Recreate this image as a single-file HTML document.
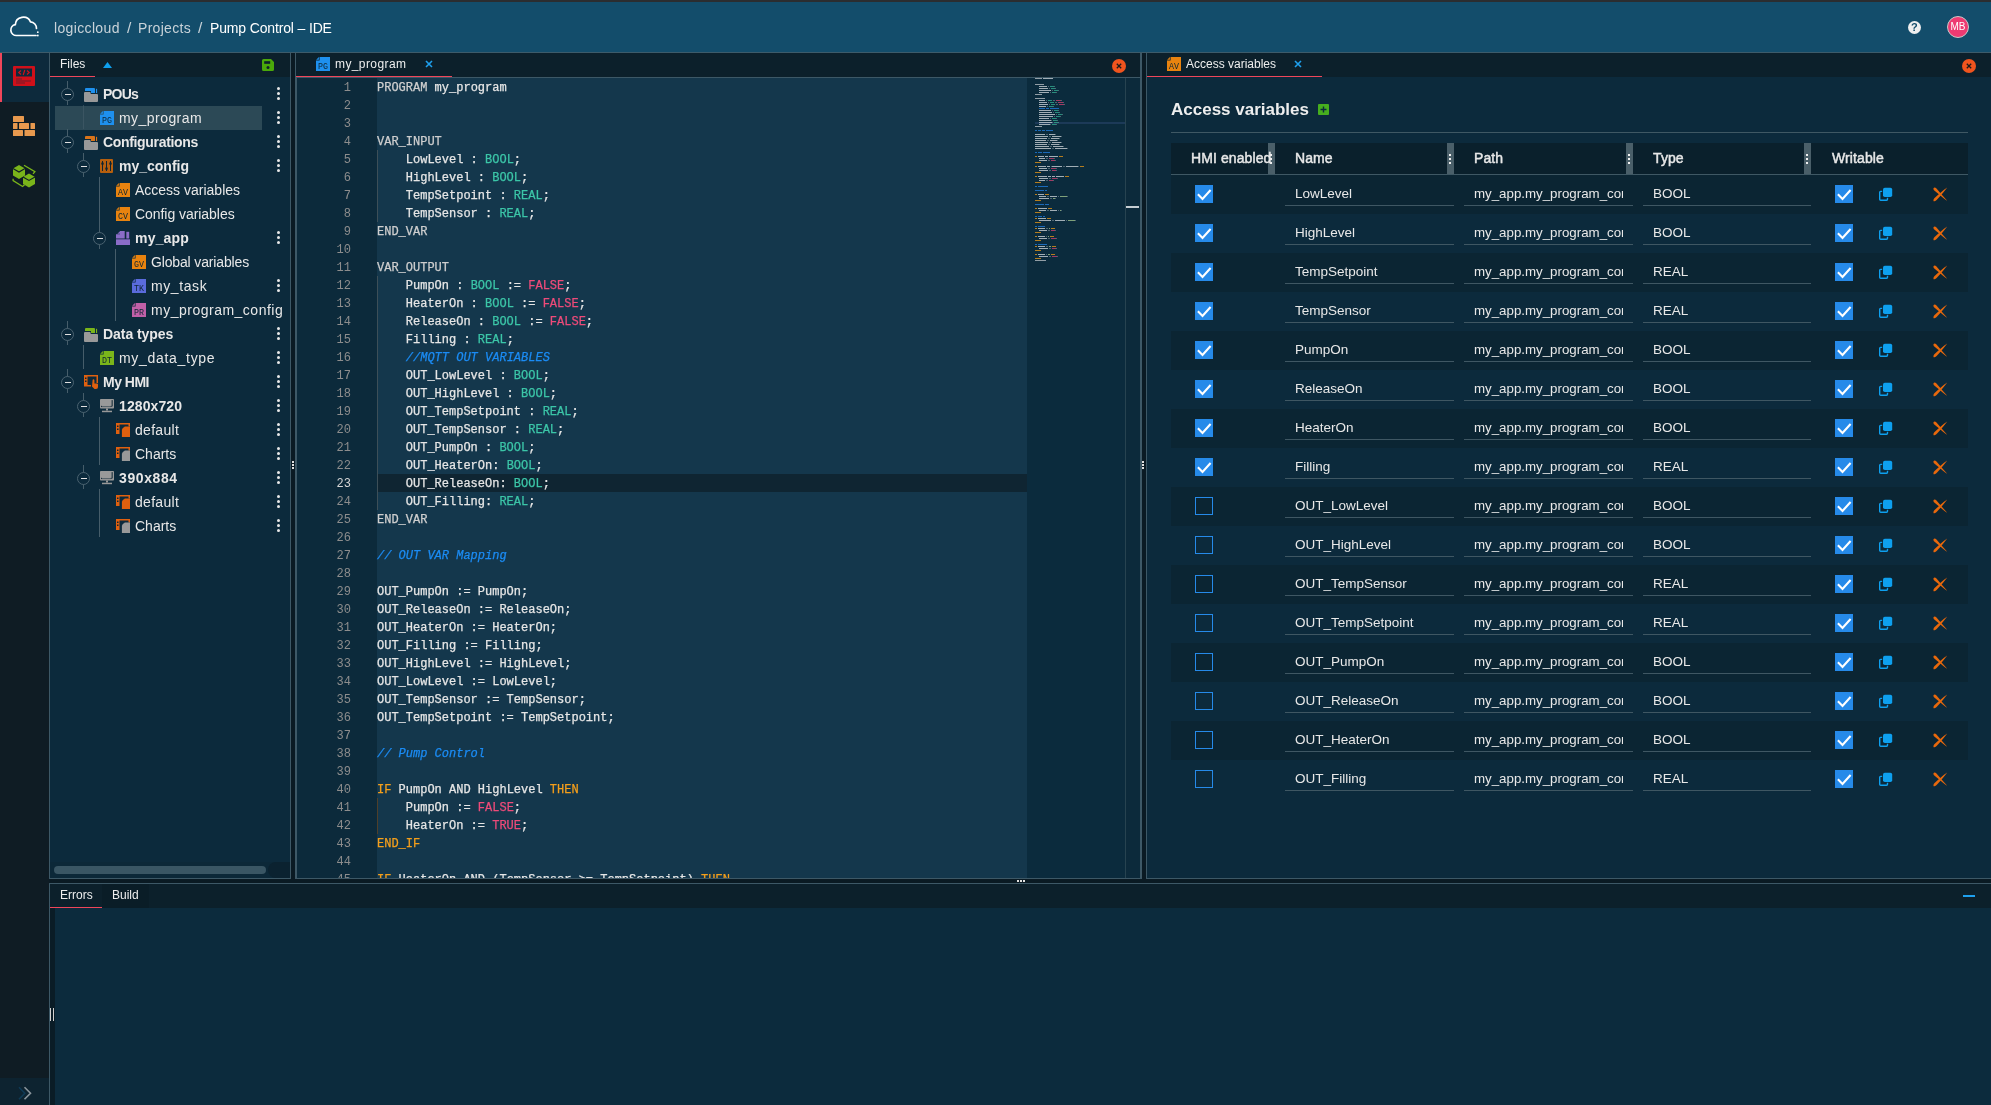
<!DOCTYPE html><html><head><meta charset="utf-8"><style>
*{box-sizing:border-box;margin:0;padding:0}
html,body{width:1991px;height:1105px;overflow:hidden;background:#0c2a3c;font-family:"Liberation Sans",sans-serif;color:#e6e6e6}
.a{position:absolute}
.t{position:absolute;white-space:nowrap;line-height:1}
.mono{font-family:"Liberation Mono",monospace}
.cl{position:absolute;left:377px;font-family:"Liberation Mono",monospace;font-size:12px;line-height:18px;height:18px;white-space:pre;color:#e6e6e6;-webkit-text-stroke:.25px currentColor}
.ln{position:absolute;width:60px;left:291px;text-align:right;font-family:"Liberation Mono",monospace;font-size:12px;line-height:18px;height:18px;color:#8d8d8d}
.k{color:#cfcfcf}.ty{color:#3cc6a8}.f{color:#ee4b7a}.c{color:#1b8cf5;font-style:italic}.o{color:#f59f1b}
.tr{position:absolute;height:24px;line-height:24px;font-size:14px;color:#e8e8e8;white-space:nowrap}
.bold{font-weight:bold}
.keb{position:absolute;left:277px;width:3px}
.keb i{display:block;width:3px;height:3px;border-radius:50%;background:#e8e8e8;margin-bottom:2px}
.vl{position:absolute;width:1px;background:#465d6a}
.circ{position:absolute;width:13px;height:13px;border:1px solid #4a6270;border-radius:50%;background:#0c2a3c}
.circ:after{content:"";position:absolute;left:2.5px;top:5px;width:6px;height:1px;background:#e0e0e0}
.ico{position:absolute;width:14px;height:14px}
.row{position:absolute;left:1171px;width:797px;height:39px}
.cb{position:absolute;width:18px;height:18px}
.inp{position:absolute;height:1px;background:#3f5763}
.ttx{position:absolute;font-size:14px;color:#e8e8e8;white-space:nowrap;line-height:1}
</style></head><body><div style="position:absolute;left:0;top:0;width:1991px;height:1105px;overflow:hidden;will-change:transform">
<div class="a" style="left:0;top:0;width:1991px;height:2px;background:#2b2d30"></div>
<div class="a" style="left:0;top:2px;width:1991px;height:51px;background:#134d6b;border-bottom:1px solid #3d5b6a"></div>
<svg class="a" style="left:9px;top:15px" width="32" height="24" viewBox="0 0 32 24"><path d="M27 20.5 H7.5 A5.5 5.5 0 0 1 6.3 9.6 A8 8 0 0 1 21.5 6.8 A6.5 6.5 0 0 1 27.5 13.5" fill="none" stroke="#fff" stroke-width="1.7" stroke-linecap="round"/><circle cx="28.8" cy="17.2" r="0.9" fill="#fff"/><circle cx="28.8" cy="20.5" r="0.9" fill="#fff"/></svg>
<div class="t" style="left:54px;top:21px;font-size:14px;letter-spacing:.35px;color:#c9d3d9">logiccloud</div>
<div class="t" style="left:127px;top:20px;font-size:15.5px;color:#c9d3d9">/</div>
<div class="t" style="left:138px;top:21px;font-size:14px;letter-spacing:.3px;color:#c9d3d9">Projects</div>
<div class="t" style="left:198px;top:20px;font-size:15.5px;color:#c9d3d9">/</div>
<div class="t" style="left:210px;top:21px;font-size:14px;color:#ffffff;letter-spacing:-.15px">Pump Control &#8211; IDE</div>
<div class="a" style="left:1908px;top:21px;width:13px;height:13px;border-radius:50%;background:#efefef"></div>
<div class="t" style="left:1911px;top:22px;font-size:11px;font-weight:bold;color:#134d6b">?</div>
<div class="a" style="left:1947px;top:16px;width:22px;height:22px;border-radius:50%;background:#ee3a72;border:1px solid #c9c9c9"></div>
<div class="t" style="left:1950px;top:22px;font-size:10px;color:#fff;width:16px;text-align:center">MB</div>
<div class="a" style="left:0;top:53px;width:49px;height:1052px;background:#0f1c24"></div>
<div class="a" style="left:0;top:53px;width:49px;height:49px;background:#0d2a3c"></div>
<div class="a" style="left:0;top:53px;width:2px;height:49px;background:#f0465a"></div>
<svg class="a" style="left:13px;top:66px" width="22" height="20" viewBox="0 0 22 20"><rect x="0" y="0" width="22" height="20" rx="1" fill="#d0101a"/><rect x="3" y="2.5" width="16" height="8" fill="#0d2a3c"/><path d="M8 4.5 L5.8 6.5 L8 8.5 M14 4.5 L16.2 6.5 L14 8.5 M11.8 4 L10.2 9" stroke="#d0101a" stroke-width="1.2" fill="none"/><rect x="3" y="12.5" width="6" height="1" fill="#0d2a3c" opacity=".5"/><rect x="3" y="14.5" width="15" height="1" fill="#0d2a3c" opacity=".5"/><rect x="3" y="16.5" width="9" height="1" fill="#0d2a3c" opacity=".5"/></svg>
<svg class="a" style="left:13px;top:116px" width="23" height="21" viewBox="0 0 23 21"><g fill="#e8994e"><rect x="0" y="0" width="11" height="6" rx=".5"/><rect x="0" y="7" width="4.5" height="6" rx=".5"/><rect x="6" y="7" width="10" height="6" rx=".5"/><rect x="17.5" y="7" width="4.5" height="6" rx=".5"/><rect x="0" y="14" width="10" height="6" rx=".5"/><rect x="11.5" y="14" width="10.5" height="6" rx=".5"/></g></svg>
<svg class="a" style="left:12px;top:164px" width="25" height="25" viewBox="0 0 25 25"><g fill="#7ab51a"><path d="M7 1 L13 4.5 V11.5 L7 15 L1 11.5 V4.5 Z"/><path d="M17 9.4 L23 12.9 V19.9 L17 23.4 L11 19.9 V12.9 Z"/></g><g stroke="#0f1c24" stroke-width="1.1" fill="none"><path d="M1 4.6 L7 8 L13 4.6"/><path d="M11 13 L17 16.4 L23 13"/></g><g stroke="#7ab51a" stroke-width="1.3" fill="none"><path d="M12 1.2 L22.9 7.6 L21 9.8"/><path d="M1.1 14.8 V16.6 L10.6 22.5 L12.5 20.7"/></g></svg>
<div class="a" style="left:0;top:1078px;width:49px;height:27px;background:#0d2330"></div>
<svg class="a" style="left:18px;top:1086px" width="14" height="15" viewBox="0 0 14 15"><path d="M1 1.3 L6.8 7.3 L1 13.3" stroke="#0f3a55" stroke-width="1.6" fill="none"/><path d="M6.5 1.3 L12.5 7.3 L6.5 13.3" stroke="#8a959c" stroke-width="1.6" fill="none"/></svg>
<div class="a" style="left:49px;top:53px;width:242px;height:826px;background:#0c2a3c;border-left:1px solid #3d5866;border-right:1px solid #3d5866;border-bottom:1px solid #3d5866"></div>
<div class="a" style="left:50px;top:53px;width:240px;height:24px;background:#0c202b"></div>
<div class="a" style="left:50px;top:76px;width:45px;height:1px;background:#f0465a;z-index:2"></div>
<div class="t" style="left:60px;top:58px;font-size:12px;color:#eeeeee">Files</div>
<svg class="a" style="left:103px;top:62px" width="9" height="6" viewBox="0 0 9 6"><path d="M0 6 L4.5 0 L9 6 Z" fill="#0ea0ee"/></svg>
<svg class="a" style="left:262px;top:59px" width="12" height="12" viewBox="0 0 12 12"><path d="M0 1.5 A1.5 1.5 0 0 1 1.5 0 H9 L12 3 V10.5 A1.5 1.5 0 0 1 10.5 12 H1.5 A1.5 1.5 0 0 1 0 10.5 Z" fill="#4aa80a"/><rect x="2.2" y="2.2" width="6" height="2.6" fill="#0c202b"/><circle cx="6" cy="8.5" r="1.5" fill="#0c202b"/></svg>
<div class="a" style="left:55px;top:106px;width:207px;height:24px;background:#2c4956"></div>
<div class="vl" style="left:67px;top:81px;height:24px"></div>
<div class="circ" style="left:61px;top:88px"></div>
<svg class="a" style="left:84px;top:87px" width="14" height="15" viewBox="0 0 14 15"><path d="M2 1 H10 A1 1 0 0 1 11 2 V6 H7 V4 H1 V2 A1 1 0 0 1 2 1 Z" fill="#1e90ee"/><rect x="12" y="1.8" width="1.1" height="4.2" fill="#1e90ee"/><path d="M0 6 A1 1 0 0 1 1 5 H6.3 L6.8 7 H13 A1 1 0 0 1 14 8 V14 A1 1 0 0 1 13 15 H1 A1 1 0 0 1 0 14 Z" fill="#999999"/></svg>
<div class="tr bold" style="left:103px;top:82px;letter-spacing:-0.75px">POUs</div>
<div class="keb" style="top:87px"><i></i><i></i><i></i></div>
<div class="vl" style="left:83px;top:105px;height:24px;opacity:.6"></div>
<svg class="a" style="left:100px;top:111px" width="14" height="14" viewBox="0 0 14 14"><path d="M3.6 0 H14 V14 H0 V3.5 H3.6 Z" fill="#1e90ee"/><path d="M0.2 2.7 L2.9 0 V2.7 Z" fill="#1e90ee"/><text x="7" y="12" font-family="Liberation Mono" font-size="8.3" text-anchor="middle" fill="#0d2533" textLength="10" lengthAdjust="spacingAndGlyphs">PG</text></svg>
<div class="tr" style="left:119px;top:106px;letter-spacing:0.45px">my_program</div>
<div class="keb" style="top:111px"><i></i><i></i><i></i></div>
<div class="vl" style="left:67px;top:129px;height:24px"></div>
<div class="circ" style="left:61px;top:136px"></div>
<svg class="a" style="left:84px;top:135px" width="14" height="15" viewBox="0 0 14 15"><path d="M2 1 H10 A1 1 0 0 1 11 2 V6 H7 V4 H1 V2 A1 1 0 0 1 2 1 Z" fill="#d9741a"/><rect x="12" y="1.8" width="1.1" height="4.2" fill="#d9741a"/><path d="M0 6 A1 1 0 0 1 1 5 H6.3 L6.8 7 H13 A1 1 0 0 1 14 8 V14 A1 1 0 0 1 13 15 H1 A1 1 0 0 1 0 14 Z" fill="#999999"/></svg>
<div class="tr bold" style="left:103px;top:130px;letter-spacing:-0.33px">Configurations</div>
<div class="keb" style="top:135px"><i></i><i></i><i></i></div>
<div class="vl" style="left:83px;top:153px;height:24px"></div>
<div class="circ" style="left:77px;top:160px"></div>
<svg class="a" style="left:100px;top:159px" width="13" height="14" viewBox="0 0 13 14"><rect width="13" height="14" rx="1" fill="#b65f0e"/><g stroke="#0d2533" stroke-width="1"><path d="M2.5 2 V12 M6.5 2 V12 M10.5 2 V12"/></g><g fill="#0d2533"><rect x="1.3" y="3.6" width="2.4" height="2"/><rect x="5.3" y="8.6" width="2.4" height="2"/><rect x="9.3" y="3.6" width="2.4" height="2"/></g></svg>
<div class="tr bold" style="left:119px;top:154px;letter-spacing:0.00px">my_config</div>
<div class="keb" style="top:159px"><i></i><i></i><i></i></div>
<div class="vl" style="left:99px;top:177px;height:24px;"></div>
<svg class="a" style="left:116px;top:183px" width="14" height="14" viewBox="0 0 14 14"><path d="M3.6 0 H14 V14 H0 V3.5 H3.6 Z" fill="#e8830f"/><path d="M0.2 2.7 L2.9 0 V2.7 Z" fill="#e8830f"/><text x="7" y="12" font-family="Liberation Mono" font-size="8.3" text-anchor="middle" fill="#0d2533" textLength="10" lengthAdjust="spacingAndGlyphs">AV</text></svg>
<div class="tr" style="left:135px;top:178px;letter-spacing:0.00px">Access variables</div>
<div class="vl" style="left:99px;top:201px;height:24px;"></div>
<svg class="a" style="left:116px;top:207px" width="14" height="14" viewBox="0 0 14 14"><path d="M3.6 0 H14 V14 H0 V3.5 H3.6 Z" fill="#e8830f"/><path d="M0.2 2.7 L2.9 0 V2.7 Z" fill="#e8830f"/><text x="7" y="12" font-family="Liberation Mono" font-size="8.3" text-anchor="middle" fill="#0d2533" textLength="10" lengthAdjust="spacingAndGlyphs">CV</text></svg>
<div class="tr" style="left:135px;top:202px;letter-spacing:-0.05px">Config variables</div>
<div class="vl" style="left:99px;top:225px;height:24px"></div>
<div class="circ" style="left:93px;top:232px"></div>
<svg class="a" style="left:116px;top:231px" width="14" height="14" viewBox="0 0 14 14"><g fill="#8a6cc8"><path d="M4 0 H8.7 V7.5 H0 V3.2 H4 Z"/><path d="M1.3 2.8 L4 0.2 V2.8 Z"/><rect x="10.3" y="0.8" width="2.9" height="6.7"/><rect x="0" y="8.3" width="14" height="5.7"/></g></svg>
<div class="tr bold" style="left:135px;top:226px;letter-spacing:0.20px">my_app</div>
<div class="keb" style="top:231px"><i></i><i></i><i></i></div>
<div class="vl" style="left:115px;top:249px;height:24px;"></div>
<svg class="a" style="left:132px;top:255px" width="14" height="14" viewBox="0 0 14 14"><path d="M3.6 0 H14 V14 H0 V3.5 H3.6 Z" fill="#e8830f"/><path d="M0.2 2.7 L2.9 0 V2.7 Z" fill="#e8830f"/><text x="7" y="12" font-family="Liberation Mono" font-size="8.3" text-anchor="middle" fill="#0d2533" textLength="10" lengthAdjust="spacingAndGlyphs">GV</text></svg>
<div class="tr" style="left:151px;top:250px;letter-spacing:-0.15px">Global variables</div>
<div class="vl" style="left:115px;top:273px;height:24px;"></div>
<svg class="a" style="left:132px;top:279px" width="14" height="14" viewBox="0 0 14 14"><path d="M3.6 0 H14 V14 H0 V3.5 H3.6 Z" fill="#5a6bdc"/><path d="M0.2 2.7 L2.9 0 V2.7 Z" fill="#5a6bdc"/><text x="7" y="12" font-family="Liberation Mono" font-size="8.3" text-anchor="middle" fill="#0d2533" textLength="10" lengthAdjust="spacingAndGlyphs">TK</text></svg>
<div class="tr" style="left:151px;top:274px;letter-spacing:0.60px">my_task</div>
<div class="keb" style="top:279px"><i></i><i></i><i></i></div>
<div class="vl" style="left:115px;top:297px;height:24px;"></div>
<svg class="a" style="left:132px;top:303px" width="14" height="14" viewBox="0 0 14 14"><path d="M3.6 0 H14 V14 H0 V3.5 H3.6 Z" fill="#c060a8"/><path d="M0.2 2.7 L2.9 0 V2.7 Z" fill="#c060a8"/><text x="7" y="12" font-family="Liberation Mono" font-size="8.3" text-anchor="middle" fill="#0d2533" textLength="10" lengthAdjust="spacingAndGlyphs">PR</text></svg>
<div class="tr" style="left:151px;top:298px;letter-spacing:0.50px">my_program_config</div>
<div class="vl" style="left:67px;top:321px;height:24px"></div>
<div class="circ" style="left:61px;top:328px"></div>
<svg class="a" style="left:84px;top:327px" width="14" height="15" viewBox="0 0 14 15"><path d="M2 1 H10 A1 1 0 0 1 11 2 V6 H7 V4 H1 V2 A1 1 0 0 1 2 1 Z" fill="#7ab51a"/><rect x="12" y="1.8" width="1.1" height="4.2" fill="#7ab51a"/><path d="M0 6 A1 1 0 0 1 1 5 H6.3 L6.8 7 H13 A1 1 0 0 1 14 8 V14 A1 1 0 0 1 13 15 H1 A1 1 0 0 1 0 14 Z" fill="#999999"/></svg>
<div class="tr bold" style="left:103px;top:322px;letter-spacing:-0.05px">Data types</div>
<div class="keb" style="top:327px"><i></i><i></i><i></i></div>
<div class="vl" style="left:83px;top:345px;height:24px;"></div>
<svg class="a" style="left:100px;top:351px" width="14" height="14" viewBox="0 0 14 14"><path d="M3.6 0 H14 V14 H0 V3.5 H3.6 Z" fill="#7ab51a"/><path d="M0.2 2.7 L2.9 0 V2.7 Z" fill="#7ab51a"/><text x="7" y="12" font-family="Liberation Mono" font-size="8.3" text-anchor="middle" fill="#0d2533" textLength="10" lengthAdjust="spacingAndGlyphs">DT</text></svg>
<div class="tr" style="left:119px;top:346px;letter-spacing:0.70px">my_data_type</div>
<div class="keb" style="top:351px"><i></i><i></i><i></i></div>
<div class="vl" style="left:67px;top:369px;height:24px"></div>
<div class="circ" style="left:61px;top:376px"></div>
<svg class="a" style="left:84px;top:375px" width="14" height="14" viewBox="0 0 14 14"><g fill="#e0600f"><path d="M0 0 H14 V8 H12.5 V1.5 H3.5 V10 H7 V11.5 H0 Z"/><path d="M8.6 5.2 a.9 .9 0 0 1 1.8 0 V8.5 H13 a1 1 0 0 1 1 1 V12 a2 2 0 0 1 -2 2 H10.5 L8 11.5 Z"/></g><g fill="#0d2533"><rect x="1" y="2.5" width="1.5" height="1.5"/><rect x="1" y="5.5" width="1.5" height="1.5"/></g></svg>
<div class="tr bold" style="left:103px;top:370px;letter-spacing:-0.50px">My HMI</div>
<div class="keb" style="top:375px"><i></i><i></i><i></i></div>
<div class="vl" style="left:83px;top:393px;height:24px"></div>
<div class="circ" style="left:77px;top:400px"></div>
<svg class="a" style="left:100px;top:399px" width="14" height="14" viewBox="0 0 14 14"><rect x="0" y="0" width="14" height="9.5" rx=".8" fill="#999999"/><path d="M1.5 7.6 H11.3" stroke="#0d2533" stroke-width="1" stroke-dasharray="1 1"/><path d="M1.5 6.8 V8 M11.3 6.8 V8 M12.2 1.2 V7.5" stroke="#0d2533" stroke-width=".8"/><path d="M11.6 2 H12.6 M11.6 4 H12.6 M11.6 6 H12.6" stroke="#0d2533" stroke-width=".7"/><rect x="6" y="9.5" width="2" height="2" fill="#999999"/><rect x="2" y="11.7" width="10" height="1.5" fill="#999999"/></svg>
<div class="tr bold" style="left:119px;top:394px;letter-spacing:0.10px">1280x720</div>
<div class="keb" style="top:399px"><i></i><i></i><i></i></div>
<div class="vl" style="left:99px;top:417px;height:24px;"></div>
<svg class="a" style="left:116px;top:423px" width="14" height="14" viewBox="0 0 14 14"><path d="M0 0 H14 V3.4 H12.5 V1.5 H3.5 V11 H0 Z" fill="#e0600f"/><g fill="#0d2533"><rect x="1" y="2.5" width="1.5" height="1.5"/><rect x="1" y="5.5" width="1.5" height="1.5"/></g><path d="M9 3.4 H14 V14 H5.9 V6.5 Z" fill="#e0600f"/><path d="M6.1 6 L8.6 3.5 V6 Z" fill="#e0600f"/></svg>
<div class="tr" style="left:135px;top:418px;letter-spacing:0.30px">default</div>
<div class="keb" style="top:423px"><i></i><i></i><i></i></div>
<div class="vl" style="left:99px;top:441px;height:24px;"></div>
<svg class="a" style="left:116px;top:447px" width="14" height="14" viewBox="0 0 14 14"><path d="M0 0 H14 V3.4 H12.5 V1.5 H3.5 V11 H0 Z" fill="#e0600f"/><g fill="#0d2533"><rect x="1" y="2.5" width="1.5" height="1.5"/><rect x="1" y="5.5" width="1.5" height="1.5"/></g><path d="M9 3.4 H14 V14 H5.9 V6.5 Z" fill="#999999"/><path d="M6.1 6 L8.6 3.5 V6 Z" fill="#999999"/></svg>
<div class="tr" style="left:135px;top:442px;letter-spacing:0.00px">Charts</div>
<div class="keb" style="top:447px"><i></i><i></i><i></i></div>
<div class="vl" style="left:83px;top:465px;height:24px"></div>
<div class="circ" style="left:77px;top:472px"></div>
<svg class="a" style="left:100px;top:471px" width="14" height="14" viewBox="0 0 14 14"><rect x="0" y="0" width="14" height="9.5" rx=".8" fill="#999999"/><path d="M1.5 7.6 H11.3" stroke="#0d2533" stroke-width="1" stroke-dasharray="1 1"/><path d="M1.5 6.8 V8 M11.3 6.8 V8 M12.2 1.2 V7.5" stroke="#0d2533" stroke-width=".8"/><path d="M11.6 2 H12.6 M11.6 4 H12.6 M11.6 6 H12.6" stroke="#0d2533" stroke-width=".7"/><rect x="6" y="9.5" width="2" height="2" fill="#999999"/><rect x="2" y="11.7" width="10" height="1.5" fill="#999999"/></svg>
<div class="tr bold" style="left:119px;top:466px;letter-spacing:0.60px">390x884</div>
<div class="keb" style="top:471px"><i></i><i></i><i></i></div>
<div class="vl" style="left:99px;top:489px;height:24px;"></div>
<svg class="a" style="left:116px;top:495px" width="14" height="14" viewBox="0 0 14 14"><path d="M0 0 H14 V3.4 H12.5 V1.5 H3.5 V11 H0 Z" fill="#e0600f"/><g fill="#0d2533"><rect x="1" y="2.5" width="1.5" height="1.5"/><rect x="1" y="5.5" width="1.5" height="1.5"/></g><path d="M9 3.4 H14 V14 H5.9 V6.5 Z" fill="#e0600f"/><path d="M6.1 6 L8.6 3.5 V6 Z" fill="#e0600f"/></svg>
<div class="tr" style="left:135px;top:490px;letter-spacing:0.30px">default</div>
<div class="keb" style="top:495px"><i></i><i></i><i></i></div>
<div class="vl" style="left:99px;top:513px;height:24px;"></div>
<svg class="a" style="left:116px;top:519px" width="14" height="14" viewBox="0 0 14 14"><path d="M0 0 H14 V3.4 H12.5 V1.5 H3.5 V11 H0 Z" fill="#e0600f"/><g fill="#0d2533"><rect x="1" y="2.5" width="1.5" height="1.5"/><rect x="1" y="5.5" width="1.5" height="1.5"/></g><path d="M9 3.4 H14 V14 H5.9 V6.5 Z" fill="#999999"/><path d="M6.1 6 L8.6 3.5 V6 Z" fill="#999999"/></svg>
<div class="tr" style="left:135px;top:514px;letter-spacing:0.00px">Charts</div>
<div class="keb" style="top:519px"><i></i><i></i><i></i></div>
<div class="a" style="left:50px;top:862px;width:240px;height:16px;background:#0c2838"></div>
<div class="a" style="left:268px;top:862px;width:22px;height:16px;border-radius:8px 0 0 8px;background:#0b2230"></div>
<div class="a" style="left:54px;top:866px;width:212px;height:8px;border-radius:4px;background:#3a5664"></div>
<div class="a" style="left:291px;top:53px;width:4px;height:826px;background:#0a1a23"></div>
<div class="a" style="left:1142px;top:53px;width:4px;height:826px;background:#0a1a23"></div>
<div class="a" style="left:49px;top:879px;width:1942px;height:4px;background:#0a1a23"></div>
<div class="a" style="left:292px;top:461px;width:2px;height:2px;background:#e0e0e0"></div>
<div class="a" style="left:292px;top:464px;width:2px;height:2px;background:#e0e0e0"></div>
<div class="a" style="left:292px;top:467px;width:2px;height:2px;background:#e0e0e0"></div>
<div class="a" style="left:1142px;top:461px;width:2px;height:2px;background:#e0e0e0"></div>
<div class="a" style="left:1142px;top:464px;width:2px;height:2px;background:#e0e0e0"></div>
<div class="a" style="left:1142px;top:467px;width:2px;height:2px;background:#e0e0e0"></div>
<div class="a" style="left:1017px;top:880px;width:2px;height:2px;background:#e0e0e0"></div>
<div class="a" style="left:1020px;top:880px;width:2px;height:2px;background:#e0e0e0"></div>
<div class="a" style="left:1023px;top:880px;width:2px;height:2px;background:#e0e0e0"></div>
<div class="a" style="left:295px;top:53px;width:847px;height:826px;background:#0c2a3b;border-left:2px solid #3d5866;border-right:2px solid #3d5866;border-bottom:1px solid #3d5866"></div>
<div class="a" style="left:296px;top:53px;width:844px;height:24px;background:#0c202b"></div>
<div class="a" style="left:296px;top:76px;width:156px;height:1px;background:#f0465a;z-index:2"></div>
<div class="a" style="left:296px;top:77px;width:844px;height:1px;background:#3d5866"></div>
<svg class="a" style="left:316px;top:57px" width="14" height="14" viewBox="0 0 14 14"><path d="M3.6 0 H14 V14 H0 V3.5 H3.6 Z" fill="#1e90ee"/><path d="M0.2 2.7 L2.9 0 V2.7 Z" fill="#1e90ee"/><text x="7" y="12" font-family="Liberation Mono" font-size="8.3" text-anchor="middle" fill="#0d2533" textLength="10" lengthAdjust="spacingAndGlyphs">PG</text></svg>
<div class="t" style="left:335px;top:58px;font-size:12px;letter-spacing:.4px;color:#eeeeee">my_program</div>
<svg class="a" style="left:425px;top:60px" width="8" height="8" viewBox="0 0 8 8"><path d="M1 1 L7 7 M7 1 L1 7" stroke="#1ea0ee" stroke-width="1.6"/></svg>
<div class="a" style="left:1112px;top:59px;width:14px;height:14px;border-radius:50%;background:#f0541e"></div>
<svg class="a" style="left:1116px;top:63px" width="6" height="6" viewBox="0 0 6 6"><path d="M.8 .8 L5.2 5.2 M5.2 .8 L.8 5.2" stroke="#1a1a1a" stroke-width="1.3"/></svg>
<div class="a" style="left:377px;top:78px;width:650px;height:800px;background:#14374c"></div>
<div class="a" style="left:1027px;top:78px;width:98px;height:800px;background:#0b2b3d"></div>
<div class="a" style="left:1125px;top:78px;width:1px;height:800px;background:#274350"></div>
<div class="a" style="left:377px;top:474px;width:650px;height:18px;background:#0f2532"></div>
<div class="a" style="left:1126px;top:206px;width:13px;height:2px;background:#c5cdd2"></div>
<div class="a" style="left:296px;top:78px;width:844px;height:800px;overflow:hidden">
<div class="ln" style="left:-5px;top:1px;">1</div>
<div class="cl" style="left:81px;top:1px"><span class="k">PROGRAM</span> my_program</div>
<div class="ln" style="left:-5px;top:19px;">2</div>
<div class="cl" style="left:81px;top:19px"></div>
<div class="ln" style="left:-5px;top:37px;">3</div>
<div class="cl" style="left:81px;top:37px"></div>
<div class="ln" style="left:-5px;top:55px;">4</div>
<div class="cl" style="left:81px;top:55px"><span class="k">VAR_INPUT</span></div>
<div class="ln" style="left:-5px;top:73px;">5</div>
<div class="cl" style="left:81px;top:73px">    LowLevel : <span class="ty">BOOL</span>;</div>
<div class="ln" style="left:-5px;top:91px;">6</div>
<div class="cl" style="left:81px;top:91px">    HighLevel : <span class="ty">BOOL</span>;</div>
<div class="ln" style="left:-5px;top:109px;">7</div>
<div class="cl" style="left:81px;top:109px">    TempSetpoint : <span class="ty">REAL</span>;</div>
<div class="ln" style="left:-5px;top:127px;">8</div>
<div class="cl" style="left:81px;top:127px">    TempSensor : <span class="ty">REAL</span>;</div>
<div class="ln" style="left:-5px;top:145px;">9</div>
<div class="cl" style="left:81px;top:145px"><span class="k">END_VAR</span></div>
<div class="ln" style="left:-5px;top:163px;">10</div>
<div class="cl" style="left:81px;top:163px"></div>
<div class="ln" style="left:-5px;top:181px;">11</div>
<div class="cl" style="left:81px;top:181px"><span class="k">VAR_OUTPUT</span></div>
<div class="ln" style="left:-5px;top:199px;">12</div>
<div class="cl" style="left:81px;top:199px">    PumpOn : <span class="ty">BOOL</span> := <span class="f">FALSE</span>;</div>
<div class="ln" style="left:-5px;top:217px;">13</div>
<div class="cl" style="left:81px;top:217px">    HeaterOn : <span class="ty">BOOL</span> := <span class="f">FALSE</span>;</div>
<div class="ln" style="left:-5px;top:235px;">14</div>
<div class="cl" style="left:81px;top:235px">    ReleaseOn : <span class="ty">BOOL</span> := <span class="f">FALSE</span>;</div>
<div class="ln" style="left:-5px;top:253px;">15</div>
<div class="cl" style="left:81px;top:253px">    Filling : <span class="ty">REAL</span>;</div>
<div class="ln" style="left:-5px;top:271px;">16</div>
<div class="cl" style="left:81px;top:271px">    <span class="c">//MQTT OUT VARIABLES</span></div>
<div class="ln" style="left:-5px;top:289px;">17</div>
<div class="cl" style="left:81px;top:289px">    OUT_LowLevel : <span class="ty">BOOL</span>;</div>
<div class="ln" style="left:-5px;top:307px;">18</div>
<div class="cl" style="left:81px;top:307px">    OUT_HighLevel : <span class="ty">BOOL</span>;</div>
<div class="ln" style="left:-5px;top:325px;">19</div>
<div class="cl" style="left:81px;top:325px">    OUT_TempSetpoint : <span class="ty">REAL</span>;</div>
<div class="ln" style="left:-5px;top:343px;">20</div>
<div class="cl" style="left:81px;top:343px">    OUT_TempSensor : <span class="ty">REAL</span>;</div>
<div class="ln" style="left:-5px;top:361px;">21</div>
<div class="cl" style="left:81px;top:361px">    OUT_PumpOn : <span class="ty">BOOL</span>;</div>
<div class="ln" style="left:-5px;top:379px;">22</div>
<div class="cl" style="left:81px;top:379px">    OUT_HeaterOn: <span class="ty">BOOL</span>;</div>
<div class="ln" style="left:-5px;top:397px;color:#d6d6d6">23</div>
<div class="cl" style="left:81px;top:397px">    OUT_ReleaseOn: <span class="ty">BOOL</span>;</div>
<div class="ln" style="left:-5px;top:415px;">24</div>
<div class="cl" style="left:81px;top:415px">    OUT_Filling: <span class="ty">REAL</span>;</div>
<div class="ln" style="left:-5px;top:433px;">25</div>
<div class="cl" style="left:81px;top:433px"><span class="k">END_VAR</span></div>
<div class="ln" style="left:-5px;top:451px;">26</div>
<div class="cl" style="left:81px;top:451px"></div>
<div class="ln" style="left:-5px;top:469px;">27</div>
<div class="cl" style="left:81px;top:469px"><span class="c">// OUT VAR Mapping</span></div>
<div class="ln" style="left:-5px;top:487px;">28</div>
<div class="cl" style="left:81px;top:487px"></div>
<div class="ln" style="left:-5px;top:505px;">29</div>
<div class="cl" style="left:81px;top:505px">OUT_PumpOn := PumpOn;</div>
<div class="ln" style="left:-5px;top:523px;">30</div>
<div class="cl" style="left:81px;top:523px">OUT_ReleaseOn := ReleaseOn;</div>
<div class="ln" style="left:-5px;top:541px;">31</div>
<div class="cl" style="left:81px;top:541px">OUT_HeaterOn := HeaterOn;</div>
<div class="ln" style="left:-5px;top:559px;">32</div>
<div class="cl" style="left:81px;top:559px">OUT_Filling := Filling;</div>
<div class="ln" style="left:-5px;top:577px;">33</div>
<div class="cl" style="left:81px;top:577px">OUT_HighLevel := HighLevel;</div>
<div class="ln" style="left:-5px;top:595px;">34</div>
<div class="cl" style="left:81px;top:595px">OUT_LowLevel := LowLevel;</div>
<div class="ln" style="left:-5px;top:613px;">35</div>
<div class="cl" style="left:81px;top:613px">OUT_TempSensor := TempSensor;</div>
<div class="ln" style="left:-5px;top:631px;">36</div>
<div class="cl" style="left:81px;top:631px">OUT_TempSetpoint := TempSetpoint;</div>
<div class="ln" style="left:-5px;top:649px;">37</div>
<div class="cl" style="left:81px;top:649px"></div>
<div class="ln" style="left:-5px;top:667px;">38</div>
<div class="cl" style="left:81px;top:667px"><span class="c">// Pump Control</span></div>
<div class="ln" style="left:-5px;top:685px;">39</div>
<div class="cl" style="left:81px;top:685px"></div>
<div class="ln" style="left:-5px;top:703px;">40</div>
<div class="cl" style="left:81px;top:703px"><span class="o">IF</span> PumpOn AND HighLevel <span class="o">THEN</span></div>
<div class="ln" style="left:-5px;top:721px;">41</div>
<div class="cl" style="left:81px;top:721px">    PumpOn := <span class="f">FALSE</span>;</div>
<div class="ln" style="left:-5px;top:739px;">42</div>
<div class="cl" style="left:81px;top:739px">    HeaterOn := <span class="f">TRUE</span>;</div>
<div class="ln" style="left:-5px;top:757px;">43</div>
<div class="cl" style="left:81px;top:757px"><span class="o">END_IF</span></div>
<div class="ln" style="left:-5px;top:775px;">44</div>
<div class="cl" style="left:81px;top:775px"></div>
<div class="ln" style="left:-5px;top:793px;">45</div>
<div class="cl" style="left:81px;top:793px"><span class="o">IF</span> HeaterOn AND (TempSensor &gt;= TempSetpoint) <span class="o">THEN</span></div>
<div class="a" style="left:81px;top:72px;width:1px;height:72px;background:#3d4f58"></div>
<div class="a" style="left:81px;top:198px;width:1px;height:234px;background:#3d4f58"></div>
<div class="a" style="left:81px;top:720px;width:1px;height:36px;background:#4f3f2a"></div>
</div>
<svg class="a" style="left:1027px;top:78px" width="98" height="200" viewBox="0 0 98 200"><rect x="8" y="44" width="90" height="2" fill="#1c3a58"/><rect x="8" y="0" width="7" height="1" fill="#b4bcc0" opacity=".8"/><rect x="16" y="0" width="10" height="1" fill="#c8d0d4" opacity=".8"/><rect x="8" y="6" width="9" height="1" fill="#b4bcc0" opacity=".8"/><rect x="12" y="8" width="8" height="1" fill="#c8d0d4" opacity=".8"/><rect x="21" y="8" width="1" height="1" fill="#c8d0d4" opacity=".35"/><rect x="23" y="8" width="4" height="1" fill="#2fa88d" opacity=".8"/><rect x="27" y="8" width="1" height="1" fill="#c8d0d4" opacity=".35"/><rect x="12" y="10" width="9" height="1" fill="#c8d0d4" opacity=".8"/><rect x="22" y="10" width="1" height="1" fill="#c8d0d4" opacity=".35"/><rect x="24" y="10" width="4" height="1" fill="#2fa88d" opacity=".8"/><rect x="28" y="10" width="1" height="1" fill="#c8d0d4" opacity=".35"/><rect x="12" y="12" width="12" height="1" fill="#c8d0d4" opacity=".8"/><rect x="25" y="12" width="1" height="1" fill="#c8d0d4" opacity=".35"/><rect x="27" y="12" width="4" height="1" fill="#2fa88d" opacity=".8"/><rect x="31" y="12" width="1" height="1" fill="#c8d0d4" opacity=".35"/><rect x="12" y="14" width="10" height="1" fill="#c8d0d4" opacity=".8"/><rect x="23" y="14" width="1" height="1" fill="#c8d0d4" opacity=".35"/><rect x="25" y="14" width="4" height="1" fill="#2fa88d" opacity=".8"/><rect x="29" y="14" width="1" height="1" fill="#c8d0d4" opacity=".35"/><rect x="8" y="16" width="7" height="1" fill="#b4bcc0" opacity=".8"/><rect x="8" y="20" width="10" height="1" fill="#b4bcc0" opacity=".8"/><rect x="12" y="22" width="6" height="1" fill="#c8d0d4" opacity=".8"/><rect x="19" y="22" width="1" height="1" fill="#c8d0d4" opacity=".35"/><rect x="21" y="22" width="4" height="1" fill="#2fa88d" opacity=".8"/><rect x="26" y="22" width="1" height="1" fill="#c8d0d4" opacity=".35"/><rect x="27" y="22" width="1" height="1" fill="#c8d0d4" opacity=".35"/><rect x="29" y="22" width="5" height="1" fill="#c8406e" opacity=".8"/><rect x="34" y="22" width="1" height="1" fill="#c8d0d4" opacity=".35"/><rect x="12" y="24" width="8" height="1" fill="#c8d0d4" opacity=".8"/><rect x="21" y="24" width="1" height="1" fill="#c8d0d4" opacity=".35"/><rect x="23" y="24" width="4" height="1" fill="#2fa88d" opacity=".8"/><rect x="28" y="24" width="1" height="1" fill="#c8d0d4" opacity=".35"/><rect x="29" y="24" width="1" height="1" fill="#c8d0d4" opacity=".35"/><rect x="31" y="24" width="5" height="1" fill="#c8406e" opacity=".8"/><rect x="36" y="24" width="1" height="1" fill="#c8d0d4" opacity=".35"/><rect x="12" y="26" width="9" height="1" fill="#c8d0d4" opacity=".8"/><rect x="22" y="26" width="1" height="1" fill="#c8d0d4" opacity=".35"/><rect x="24" y="26" width="4" height="1" fill="#2fa88d" opacity=".8"/><rect x="29" y="26" width="1" height="1" fill="#c8d0d4" opacity=".35"/><rect x="30" y="26" width="1" height="1" fill="#c8d0d4" opacity=".35"/><rect x="32" y="26" width="5" height="1" fill="#c8406e" opacity=".8"/><rect x="37" y="26" width="1" height="1" fill="#c8d0d4" opacity=".35"/><rect x="12" y="28" width="7" height="1" fill="#c8d0d4" opacity=".8"/><rect x="20" y="28" width="1" height="1" fill="#c8d0d4" opacity=".35"/><rect x="22" y="28" width="4" height="1" fill="#2fa88d" opacity=".8"/><rect x="26" y="28" width="1" height="1" fill="#c8d0d4" opacity=".35"/><rect x="12" y="30" width="6" height="1" fill="#1f7ad8" opacity=".8"/><rect x="19" y="30" width="3" height="1" fill="#1f7ad8" opacity=".8"/><rect x="23" y="30" width="9" height="1" fill="#1f7ad8" opacity=".8"/><rect x="12" y="32" width="12" height="1" fill="#c8d0d4" opacity=".8"/><rect x="25" y="32" width="1" height="1" fill="#c8d0d4" opacity=".35"/><rect x="27" y="32" width="4" height="1" fill="#2fa88d" opacity=".8"/><rect x="31" y="32" width="1" height="1" fill="#c8d0d4" opacity=".35"/><rect x="12" y="34" width="13" height="1" fill="#c8d0d4" opacity=".8"/><rect x="26" y="34" width="1" height="1" fill="#c8d0d4" opacity=".35"/><rect x="28" y="34" width="4" height="1" fill="#2fa88d" opacity=".8"/><rect x="32" y="34" width="1" height="1" fill="#c8d0d4" opacity=".35"/><rect x="12" y="36" width="16" height="1" fill="#c8d0d4" opacity=".8"/><rect x="29" y="36" width="1" height="1" fill="#c8d0d4" opacity=".35"/><rect x="31" y="36" width="4" height="1" fill="#2fa88d" opacity=".8"/><rect x="35" y="36" width="1" height="1" fill="#c8d0d4" opacity=".35"/><rect x="12" y="38" width="14" height="1" fill="#c8d0d4" opacity=".8"/><rect x="27" y="38" width="1" height="1" fill="#c8d0d4" opacity=".35"/><rect x="29" y="38" width="4" height="1" fill="#2fa88d" opacity=".8"/><rect x="33" y="38" width="1" height="1" fill="#c8d0d4" opacity=".35"/><rect x="12" y="40" width="10" height="1" fill="#c8d0d4" opacity=".8"/><rect x="23" y="40" width="1" height="1" fill="#c8d0d4" opacity=".35"/><rect x="25" y="40" width="4" height="1" fill="#2fa88d" opacity=".8"/><rect x="29" y="40" width="1" height="1" fill="#c8d0d4" opacity=".35"/><rect x="12" y="42" width="12" height="1" fill="#c8d0d4" opacity=".8"/><rect x="24" y="42" width="1" height="1" fill="#c8d0d4" opacity=".35"/><rect x="26" y="42" width="4" height="1" fill="#2fa88d" opacity=".8"/><rect x="30" y="42" width="1" height="1" fill="#c8d0d4" opacity=".35"/><rect x="12" y="44" width="13" height="1" fill="#c8d0d4" opacity=".8"/><rect x="25" y="44" width="1" height="1" fill="#c8d0d4" opacity=".35"/><rect x="27" y="44" width="4" height="1" fill="#2fa88d" opacity=".8"/><rect x="31" y="44" width="1" height="1" fill="#c8d0d4" opacity=".35"/><rect x="12" y="46" width="11" height="1" fill="#c8d0d4" opacity=".8"/><rect x="23" y="46" width="1" height="1" fill="#c8d0d4" opacity=".35"/><rect x="25" y="46" width="4" height="1" fill="#2fa88d" opacity=".8"/><rect x="29" y="46" width="1" height="1" fill="#c8d0d4" opacity=".35"/><rect x="8" y="48" width="7" height="1" fill="#b4bcc0" opacity=".8"/><rect x="8" y="52" width="0" height="1" fill="#c8d0d4" opacity=".35"/><rect x="8" y="52" width="2" height="1" fill="#1f7ad8" opacity=".8"/><rect x="11" y="52" width="3" height="1" fill="#1f7ad8" opacity=".8"/><rect x="15" y="52" width="3" height="1" fill="#1f7ad8" opacity=".8"/><rect x="19" y="52" width="7" height="1" fill="#1f7ad8" opacity=".8"/><rect x="8" y="56" width="10" height="1" fill="#c8d0d4" opacity=".8"/><rect x="19" y="56" width="1" height="1" fill="#c8d0d4" opacity=".35"/><rect x="20" y="56" width="1" height="1" fill="#c8d0d4" opacity=".35"/><rect x="22" y="56" width="6" height="1" fill="#c8d0d4" opacity=".8"/><rect x="28" y="56" width="1" height="1" fill="#c8d0d4" opacity=".35"/><rect x="8" y="58" width="13" height="1" fill="#c8d0d4" opacity=".8"/><rect x="22" y="58" width="1" height="1" fill="#c8d0d4" opacity=".35"/><rect x="23" y="58" width="1" height="1" fill="#c8d0d4" opacity=".35"/><rect x="25" y="58" width="9" height="1" fill="#c8d0d4" opacity=".8"/><rect x="34" y="58" width="1" height="1" fill="#c8d0d4" opacity=".35"/><rect x="8" y="60" width="12" height="1" fill="#c8d0d4" opacity=".8"/><rect x="21" y="60" width="1" height="1" fill="#c8d0d4" opacity=".35"/><rect x="22" y="60" width="1" height="1" fill="#c8d0d4" opacity=".35"/><rect x="24" y="60" width="8" height="1" fill="#c8d0d4" opacity=".8"/><rect x="32" y="60" width="1" height="1" fill="#c8d0d4" opacity=".35"/><rect x="8" y="62" width="11" height="1" fill="#c8d0d4" opacity=".8"/><rect x="20" y="62" width="1" height="1" fill="#c8d0d4" opacity=".35"/><rect x="21" y="62" width="1" height="1" fill="#c8d0d4" opacity=".35"/><rect x="23" y="62" width="7" height="1" fill="#c8d0d4" opacity=".8"/><rect x="30" y="62" width="1" height="1" fill="#c8d0d4" opacity=".35"/><rect x="8" y="64" width="13" height="1" fill="#c8d0d4" opacity=".8"/><rect x="22" y="64" width="1" height="1" fill="#c8d0d4" opacity=".35"/><rect x="23" y="64" width="1" height="1" fill="#c8d0d4" opacity=".35"/><rect x="25" y="64" width="9" height="1" fill="#c8d0d4" opacity=".8"/><rect x="34" y="64" width="1" height="1" fill="#c8d0d4" opacity=".35"/><rect x="8" y="66" width="12" height="1" fill="#c8d0d4" opacity=".8"/><rect x="21" y="66" width="1" height="1" fill="#c8d0d4" opacity=".35"/><rect x="22" y="66" width="1" height="1" fill="#c8d0d4" opacity=".35"/><rect x="24" y="66" width="8" height="1" fill="#c8d0d4" opacity=".8"/><rect x="32" y="66" width="1" height="1" fill="#c8d0d4" opacity=".35"/><rect x="8" y="68" width="14" height="1" fill="#c8d0d4" opacity=".8"/><rect x="23" y="68" width="1" height="1" fill="#c8d0d4" opacity=".35"/><rect x="24" y="68" width="1" height="1" fill="#c8d0d4" opacity=".35"/><rect x="26" y="68" width="10" height="1" fill="#c8d0d4" opacity=".8"/><rect x="36" y="68" width="1" height="1" fill="#c8d0d4" opacity=".35"/><rect x="8" y="70" width="16" height="1" fill="#c8d0d4" opacity=".8"/><rect x="25" y="70" width="1" height="1" fill="#c8d0d4" opacity=".35"/><rect x="26" y="70" width="1" height="1" fill="#c8d0d4" opacity=".35"/><rect x="28" y="70" width="12" height="1" fill="#c8d0d4" opacity=".8"/><rect x="40" y="70" width="1" height="1" fill="#c8d0d4" opacity=".35"/><rect x="8" y="74" width="0" height="1" fill="#c8d0d4" opacity=".35"/><rect x="8" y="74" width="2" height="1" fill="#1f7ad8" opacity=".8"/><rect x="11" y="74" width="4" height="1" fill="#1f7ad8" opacity=".8"/><rect x="16" y="74" width="7" height="1" fill="#1f7ad8" opacity=".8"/><rect x="8" y="78" width="2" height="1" fill="#e09418" opacity=".8"/><rect x="11" y="78" width="6" height="1" fill="#c8d0d4" opacity=".8"/><rect x="18" y="78" width="3" height="1" fill="#c8d0d4" opacity=".8"/><rect x="22" y="78" width="9" height="1" fill="#c8d0d4" opacity=".8"/><rect x="32" y="78" width="4" height="1" fill="#e09418" opacity=".8"/><rect x="12" y="80" width="6" height="1" fill="#c8d0d4" opacity=".8"/><rect x="19" y="80" width="1" height="1" fill="#c8d0d4" opacity=".35"/><rect x="20" y="80" width="1" height="1" fill="#c8d0d4" opacity=".35"/><rect x="22" y="80" width="5" height="1" fill="#c8406e" opacity=".8"/><rect x="27" y="80" width="1" height="1" fill="#c8d0d4" opacity=".35"/><rect x="12" y="82" width="8" height="1" fill="#c8d0d4" opacity=".8"/><rect x="21" y="82" width="1" height="1" fill="#c8d0d4" opacity=".35"/><rect x="22" y="82" width="1" height="1" fill="#c8d0d4" opacity=".35"/><rect x="24" y="82" width="4" height="1" fill="#c8406e" opacity=".8"/><rect x="28" y="82" width="1" height="1" fill="#c8d0d4" opacity=".35"/><rect x="8" y="84" width="6" height="1" fill="#e09418" opacity=".8"/><rect x="8" y="88" width="2" height="1" fill="#e09418" opacity=".8"/><rect x="11" y="88" width="8" height="1" fill="#c8d0d4" opacity=".8"/><rect x="20" y="88" width="3" height="1" fill="#c8d0d4" opacity=".8"/><rect x="24" y="88" width="1" height="1" fill="#c8d0d4" opacity=".35"/><rect x="25" y="88" width="10" height="1" fill="#c8d0d4" opacity=".8"/><rect x="36" y="88" width="1" height="1" fill="#c8d0d4" opacity=".35"/><rect x="37" y="88" width="1" height="1" fill="#c8d0d4" opacity=".35"/><rect x="39" y="88" width="12" height="1" fill="#c8d0d4" opacity=".8"/><rect x="51" y="88" width="1" height="1" fill="#c8d0d4" opacity=".35"/><rect x="53" y="88" width="4" height="1" fill="#e09418" opacity=".8"/><rect x="12" y="90" width="8" height="1" fill="#c8d0d4" opacity=".8"/><rect x="21" y="90" width="1" height="1" fill="#c8d0d4" opacity=".35"/><rect x="22" y="90" width="1" height="1" fill="#c8d0d4" opacity=".35"/><rect x="24" y="90" width="5" height="1" fill="#c8406e" opacity=".8"/><rect x="29" y="90" width="1" height="1" fill="#c8d0d4" opacity=".35"/><rect x="12" y="92" width="9" height="1" fill="#c8d0d4" opacity=".8"/><rect x="22" y="92" width="1" height="1" fill="#c8d0d4" opacity=".35"/><rect x="23" y="92" width="1" height="1" fill="#c8d0d4" opacity=".35"/><rect x="25" y="92" width="4" height="1" fill="#c8406e" opacity=".8"/><rect x="29" y="92" width="1" height="1" fill="#c8d0d4" opacity=".35"/><rect x="8" y="94" width="6" height="1" fill="#e09418" opacity=".8"/><rect x="8" y="98" width="2" height="1" fill="#e09418" opacity=".8"/><rect x="11" y="98" width="9" height="1" fill="#c8d0d4" opacity=".8"/><rect x="21" y="98" width="3" height="1" fill="#c8d0d4" opacity=".8"/><rect x="25" y="98" width="3" height="1" fill="#c8d0d4" opacity=".8"/><rect x="29" y="98" width="8" height="1" fill="#c8d0d4" opacity=".8"/><rect x="38" y="98" width="4" height="1" fill="#e09418" opacity=".8"/><rect x="12" y="100" width="9" height="1" fill="#c8d0d4" opacity=".8"/><rect x="22" y="100" width="1" height="1" fill="#c8d0d4" opacity=".35"/><rect x="23" y="100" width="1" height="1" fill="#c8d0d4" opacity=".35"/><rect x="25" y="100" width="5" height="1" fill="#c8406e" opacity=".8"/><rect x="30" y="100" width="1" height="1" fill="#c8d0d4" opacity=".35"/><rect x="12" y="102" width="6" height="1" fill="#c8d0d4" opacity=".8"/><rect x="19" y="102" width="1" height="1" fill="#c8d0d4" opacity=".35"/><rect x="20" y="102" width="1" height="1" fill="#c8d0d4" opacity=".35"/><rect x="22" y="102" width="4" height="1" fill="#c8406e" opacity=".8"/><rect x="26" y="102" width="1" height="1" fill="#c8d0d4" opacity=".35"/><rect x="8" y="104" width="6" height="1" fill="#e09418" opacity=".8"/><rect x="8" y="108" width="0" height="1" fill="#c8d0d4" opacity=".35"/><rect x="8" y="108" width="2" height="1" fill="#1f7ad8" opacity=".8"/><rect x="11" y="108" width="10" height="1" fill="#1f7ad8" opacity=".8"/><rect x="8" y="112" width="0" height="1" fill="#c8d0d4" opacity=".35"/><rect x="8" y="112" width="9" height="1" fill="#1f7ad8" opacity=".8"/><rect x="18" y="112" width="2" height="1" fill="#1f7ad8" opacity=".8"/><rect x="8" y="116" width="2" height="1" fill="#e09418" opacity=".8"/><rect x="11" y="116" width="6" height="1" fill="#c8d0d4" opacity=".8"/><rect x="18" y="116" width="4" height="1" fill="#e09418" opacity=".8"/><rect x="12" y="118" width="7" height="1" fill="#c8d0d4" opacity=".8"/><rect x="20" y="118" width="1" height="1" fill="#c8d0d4" opacity=".35"/><rect x="21" y="118" width="1" height="1" fill="#c8d0d4" opacity=".35"/><rect x="23" y="118" width="7" height="1" fill="#c8d0d4" opacity=".8"/><rect x="31" y="118" width="1" height="1" fill="#c8d0d4" opacity=".35"/><rect x="33" y="118" width="7" height="1" fill="#9cbf8a" opacity=".8"/><rect x="40" y="118" width="1" height="1" fill="#c8d0d4" opacity=".35"/><rect x="12" y="120" width="10" height="1" fill="#c8d0d4" opacity=".8"/><rect x="23" y="120" width="1" height="1" fill="#c8d0d4" opacity=".35"/><rect x="24" y="120" width="1" height="1" fill="#c8d0d4" opacity=".35"/><rect x="26" y="120" width="2" height="1" fill="#9cbf8a" opacity=".8"/><rect x="28" y="120" width="1" height="1" fill="#c8d0d4" opacity=".35"/><rect x="8" y="122" width="6" height="1" fill="#e09418" opacity=".8"/><rect x="8" y="126" width="0" height="1" fill="#c8d0d4" opacity=".35"/><rect x="8" y="126" width="9" height="1" fill="#1f7ad8" opacity=".8"/><rect x="18" y="126" width="4" height="1" fill="#1f7ad8" opacity=".8"/><rect x="8" y="130" width="2" height="1" fill="#e09418" opacity=".8"/><rect x="11" y="130" width="9" height="1" fill="#c8d0d4" opacity=".8"/><rect x="21" y="130" width="4" height="1" fill="#e09418" opacity=".8"/><rect x="12" y="132" width="7" height="1" fill="#c8d0d4" opacity=".8"/><rect x="20" y="132" width="1" height="1" fill="#c8d0d4" opacity=".35"/><rect x="21" y="132" width="1" height="1" fill="#c8d0d4" opacity=".35"/><rect x="23" y="132" width="7" height="1" fill="#c8d0d4" opacity=".8"/><rect x="31" y="132" width="1" height="1" fill="#c8d0d4" opacity=".35"/><rect x="33" y="132" width="1" height="1" fill="#9cbf8a" opacity=".8"/><rect x="34" y="132" width="1" height="1" fill="#c8d0d4" opacity=".35"/><rect x="8" y="134" width="6" height="1" fill="#e09418" opacity=".8"/><rect x="8" y="138" width="0" height="1" fill="#c8d0d4" opacity=".35"/><rect x="8" y="138" width="2" height="1" fill="#1f7ad8" opacity=".8"/><rect x="11" y="138" width="4" height="1" fill="#1f7ad8" opacity=".8"/><rect x="16" y="138" width="2" height="1" fill="#1f7ad8" opacity=".8"/><rect x="8" y="140" width="2" height="1" fill="#e09418" opacity=".8"/><rect x="11" y="140" width="8" height="1" fill="#c8d0d4" opacity=".8"/><rect x="20" y="140" width="4" height="1" fill="#e09418" opacity=".8"/><rect x="12" y="142" width="12" height="1" fill="#c8d0d4" opacity=".8"/><rect x="25" y="142" width="1" height="1" fill="#c8d0d4" opacity=".35"/><rect x="26" y="142" width="1" height="1" fill="#c8d0d4" opacity=".35"/><rect x="28" y="142" width="10" height="1" fill="#c8d0d4" opacity=".8"/><rect x="39" y="142" width="1" height="1" fill="#c8d0d4" opacity=".35"/><rect x="41" y="142" width="7" height="1" fill="#9cbf8a" opacity=".8"/><rect x="48" y="142" width="1" height="1" fill="#c8d0d4" opacity=".35"/><rect x="8" y="144" width="6" height="1" fill="#e09418" opacity=".8"/><rect x="8" y="148" width="0" height="1" fill="#c8d0d4" opacity=".35"/><rect x="8" y="148" width="2" height="1" fill="#1f7ad8" opacity=".8"/><rect x="11" y="148" width="7" height="1" fill="#1f7ad8" opacity=".8"/><rect x="8" y="150" width="2" height="1" fill="#e09418" opacity=".8"/><rect x="11" y="150" width="7" height="1" fill="#c8d0d4" opacity=".8"/><rect x="19" y="150" width="1" height="1" fill="#c8d0d4" opacity=".35"/><rect x="20" y="150" width="1" height="1" fill="#c8d0d4" opacity=".35"/><rect x="22" y="150" width="1" height="1" fill="#9cbf8a" opacity=".8"/><rect x="24" y="150" width="4" height="1" fill="#e09418" opacity=".8"/><rect x="12" y="152" width="8" height="1" fill="#c8d0d4" opacity=".8"/><rect x="21" y="152" width="1" height="1" fill="#c8d0d4" opacity=".35"/><rect x="22" y="152" width="1" height="1" fill="#c8d0d4" opacity=".35"/><rect x="24" y="152" width="4" height="1" fill="#c8406e" opacity=".8"/><rect x="28" y="152" width="1" height="1" fill="#c8d0d4" opacity=".35"/><rect x="8" y="154" width="6" height="1" fill="#e09418" opacity=".8"/><rect x="8" y="158" width="2" height="1" fill="#e09418" opacity=".8"/><rect x="11" y="158" width="7" height="1" fill="#c8d0d4" opacity=".8"/><rect x="19" y="158" width="1" height="1" fill="#c8d0d4" opacity=".35"/><rect x="21" y="158" width="1" height="1" fill="#9cbf8a" opacity=".8"/><rect x="23" y="158" width="4" height="1" fill="#e09418" opacity=".8"/><rect x="12" y="160" width="8" height="1" fill="#c8d0d4" opacity=".8"/><rect x="21" y="160" width="1" height="1" fill="#c8d0d4" opacity=".35"/><rect x="22" y="160" width="1" height="1" fill="#c8d0d4" opacity=".35"/><rect x="24" y="160" width="5" height="1" fill="#c8406e" opacity=".8"/><rect x="29" y="160" width="1" height="1" fill="#c8d0d4" opacity=".35"/><rect x="8" y="162" width="6" height="1" fill="#e09418" opacity=".8"/><rect x="8" y="166" width="0" height="1" fill="#c8d0d4" opacity=".35"/><rect x="8" y="166" width="2" height="1" fill="#1f7ad8" opacity=".8"/><rect x="11" y="166" width="9" height="1" fill="#1f7ad8" opacity=".8"/><rect x="8" y="168" width="2" height="1" fill="#e09418" opacity=".8"/><rect x="11" y="168" width="7" height="1" fill="#c8d0d4" opacity=".8"/><rect x="19" y="168" width="1" height="1" fill="#c8d0d4" opacity=".35"/><rect x="20" y="168" width="1" height="1" fill="#c8d0d4" opacity=".35"/><rect x="22" y="168" width="2" height="1" fill="#9cbf8a" opacity=".8"/><rect x="25" y="168" width="4" height="1" fill="#e09418" opacity=".8"/><rect x="12" y="170" width="9" height="1" fill="#c8d0d4" opacity=".8"/><rect x="22" y="170" width="1" height="1" fill="#c8d0d4" opacity=".35"/><rect x="23" y="170" width="1" height="1" fill="#c8d0d4" opacity=".35"/><rect x="25" y="170" width="4" height="1" fill="#c8406e" opacity=".8"/><rect x="29" y="170" width="1" height="1" fill="#c8d0d4" opacity=".35"/><rect x="8" y="172" width="6" height="1" fill="#e09418" opacity=".8"/><rect x="8" y="176" width="2" height="1" fill="#e09418" opacity=".8"/><rect x="11" y="176" width="7" height="1" fill="#c8d0d4" opacity=".8"/><rect x="19" y="176" width="1" height="1" fill="#c8d0d4" opacity=".35"/><rect x="21" y="176" width="2" height="1" fill="#9cbf8a" opacity=".8"/><rect x="24" y="176" width="4" height="1" fill="#e09418" opacity=".8"/><rect x="12" y="178" width="9" height="1" fill="#c8d0d4" opacity=".8"/><rect x="22" y="178" width="1" height="1" fill="#c8d0d4" opacity=".35"/><rect x="23" y="178" width="1" height="1" fill="#c8d0d4" opacity=".35"/><rect x="25" y="178" width="5" height="1" fill="#c8406e" opacity=".8"/><rect x="30" y="178" width="1" height="1" fill="#c8d0d4" opacity=".35"/><rect x="8" y="180" width="6" height="1" fill="#e09418" opacity=".8"/><rect x="8" y="182" width="11" height="1" fill="#b4bcc0" opacity=".8"/></svg>
<div class="a" style="left:1146px;top:53px;width:845px;height:826px;background:#0c2a3c;border-left:1px solid #3d5866;border-bottom:1px solid #3d5866"></div>
<div class="a" style="left:1147px;top:53px;width:844px;height:24px;background:#0c202b"></div>
<div class="a" style="left:1147px;top:76px;width:175px;height:1px;background:#f0465a;z-index:2"></div>
<svg class="a" style="left:1167px;top:57px" width="14" height="14" viewBox="0 0 14 14"><path d="M3.6 0 H14 V14 H0 V3.5 H3.6 Z" fill="#e8830f"/><path d="M0.2 2.7 L2.9 0 V2.7 Z" fill="#e8830f"/><text x="7" y="12" font-family="Liberation Mono" font-size="8.3" text-anchor="middle" fill="#0d2533" textLength="10" lengthAdjust="spacingAndGlyphs">AV</text></svg>
<div class="t" style="left:1186px;top:58px;font-size:12px;color:#eeeeee">Access variables</div>
<svg class="a" style="left:1294px;top:60px" width="8" height="8" viewBox="0 0 8 8"><path d="M1 1 L7 7 M7 1 L1 7" stroke="#1ea0ee" stroke-width="1.6"/></svg>
<div class="a" style="left:1962px;top:59px;width:14px;height:14px;border-radius:50%;background:#f0541e"></div>
<svg class="a" style="left:1966px;top:63px" width="6" height="6" viewBox="0 0 6 6"><path d="M.8 .8 L5.2 5.2 M5.2 .8 L.8 5.2" stroke="#1a1a1a" stroke-width="1.3"/></svg>
<div class="t bold" style="left:1171px;top:101px;font-size:17px;color:#eeeeee">Access variables</div>
<svg class="a" style="left:1318px;top:104px" width="11" height="11" viewBox="0 0 11 11"><rect width="11" height="11" rx="1" fill="#46ae1e"/><path d="M5.5 2.5 V8.5 M2.5 5.5 H8.5" stroke="#0c2a3c" stroke-width="1.4"/></svg>
<div class="a" style="left:1171px;top:132px;width:797px;height:1px;background:#3f5864"></div>
<div class="a" style="left:1171px;top:143px;width:797px;height:31px;background:#0a202c"></div>
<div class="a" style="left:1171px;top:174px;width:797px;height:1px;background:#3f5864"></div>
<div class="a" style="left:1268px;top:143px;width:7px;height:31px;background:#4a5f69"></div>
<div class="a" style="left:1270px;top:154px;width:2px;height:2px;background:#f0f0f0"></div>
<div class="a" style="left:1270px;top:158px;width:2px;height:2px;background:#f0f0f0"></div>
<div class="a" style="left:1270px;top:162px;width:2px;height:2px;background:#f0f0f0"></div>
<div class="a" style="left:1447px;top:143px;width:7px;height:31px;background:#4a5f69"></div>
<div class="a" style="left:1449px;top:154px;width:2px;height:2px;background:#f0f0f0"></div>
<div class="a" style="left:1449px;top:158px;width:2px;height:2px;background:#f0f0f0"></div>
<div class="a" style="left:1449px;top:162px;width:2px;height:2px;background:#f0f0f0"></div>
<div class="a" style="left:1626px;top:143px;width:7px;height:31px;background:#4a5f69"></div>
<div class="a" style="left:1628px;top:154px;width:2px;height:2px;background:#f0f0f0"></div>
<div class="a" style="left:1628px;top:158px;width:2px;height:2px;background:#f0f0f0"></div>
<div class="a" style="left:1628px;top:162px;width:2px;height:2px;background:#f0f0f0"></div>
<div class="a" style="left:1804px;top:143px;width:7px;height:31px;background:#4a5f69"></div>
<div class="a" style="left:1806px;top:154px;width:2px;height:2px;background:#f0f0f0"></div>
<div class="a" style="left:1806px;top:158px;width:2px;height:2px;background:#f0f0f0"></div>
<div class="a" style="left:1806px;top:162px;width:2px;height:2px;background:#f0f0f0"></div>
<div class="ttx" style="left:1191px;top:151px;-webkit-text-stroke:.45px #e8e8e8;letter-spacing:.1px">HMI enabled</div>
<div class="ttx" style="left:1295px;top:151px;-webkit-text-stroke:.45px #e8e8e8;letter-spacing:.1px">Name</div>
<div class="ttx" style="left:1474px;top:151px;-webkit-text-stroke:.45px #e8e8e8;letter-spacing:.1px">Path</div>
<div class="ttx" style="left:1653px;top:151px;-webkit-text-stroke:.45px #e8e8e8;letter-spacing:.1px">Type</div>
<div class="ttx" style="left:1832px;top:151px;-webkit-text-stroke:.45px #e8e8e8;letter-spacing:.1px">Writable</div>
<div class="a" style="left:1171px;top:175px;width:797px;height:39px;background:#0b2533"></div>
<svg class="cb" style="left:1195px;top:185px" viewBox="0 0 18 18"><rect width="18" height="18" fill="#268ae9"/><path d="M2.9 9.3 L7.5 13.9 L15.6 5" stroke="#fff" stroke-width="2.1" fill="none"/></svg>
<div class="ttx" style="left:1295px;top:187px;font-size:13.5px">LowLevel</div>
<div class="ttx" style="left:1474px;top:187px;font-size:13.3px;width:149px;height:18px;overflow:hidden">my_app.my_program_config</div>
<div class="ttx" style="left:1653px;top:187px;font-size:13.5px">BOOL</div>
<div class="inp" style="left:1285px;top:205px;width:169px"></div>
<div class="inp" style="left:1464px;top:205px;width:169px"></div>
<div class="inp" style="left:1643px;top:205px;width:168px"></div>
<svg class="cb" style="left:1835px;top:185px" viewBox="0 0 18 18"><rect width="18" height="18" fill="#268ae9"/><path d="M2.9 9.3 L7.5 13.9 L15.6 5" stroke="#fff" stroke-width="2.1" fill="none"/></svg>
<svg class="a" style="left:1879px;top:187px" width="14" height="14" viewBox="0 0 14 14"><rect x="4" y="0.8" width="9.2" height="9.2" rx="1.8" fill="#0ea0ef"/><path d="M3.2 4.4 H1.6 A.9 .9 0 0 0 .7 5.3 V12.3 A.9 .9 0 0 0 1.6 13.2 H7.6 A.9 .9 0 0 0 8.5 12.3 V10.8" stroke="#0ea0ef" stroke-width="1.4" fill="none"/></svg>
<svg class="a" style="left:1933px;top:187px" width="15" height="15" viewBox="0 0 15 15"><g fill="#e8680c"><path d="M0.4 1.6 C0.8 0.2 2.2 0 3 1 C6 4.5 10 9 14.2 13.8 C13.6 13.6 13 13.2 12.2 12.6 C8.5 9.5 4.5 6 1 3.2 C0.5 2.7 0.3 2.2 0.4 1.6 Z"/><path d="M14.2 0.6 C10 3.5 5.5 7.5 1.6 11 C0.6 11.9 0.2 13 0.6 14.3 C1.8 14.3 2.8 13.8 3.6 13 C7 9.6 10.6 5.2 14.2 0.6 Z"/></g></svg>
<svg class="cb" style="left:1195px;top:224px" viewBox="0 0 18 18"><rect width="18" height="18" fill="#268ae9"/><path d="M2.9 9.3 L7.5 13.9 L15.6 5" stroke="#fff" stroke-width="2.1" fill="none"/></svg>
<div class="ttx" style="left:1295px;top:226px;font-size:13.5px">HighLevel</div>
<div class="ttx" style="left:1474px;top:226px;font-size:13.3px;width:149px;height:18px;overflow:hidden">my_app.my_program_config</div>
<div class="ttx" style="left:1653px;top:226px;font-size:13.5px">BOOL</div>
<div class="inp" style="left:1285px;top:244px;width:169px"></div>
<div class="inp" style="left:1464px;top:244px;width:169px"></div>
<div class="inp" style="left:1643px;top:244px;width:168px"></div>
<svg class="cb" style="left:1835px;top:224px" viewBox="0 0 18 18"><rect width="18" height="18" fill="#268ae9"/><path d="M2.9 9.3 L7.5 13.9 L15.6 5" stroke="#fff" stroke-width="2.1" fill="none"/></svg>
<svg class="a" style="left:1879px;top:226px" width="14" height="14" viewBox="0 0 14 14"><rect x="4" y="0.8" width="9.2" height="9.2" rx="1.8" fill="#0ea0ef"/><path d="M3.2 4.4 H1.6 A.9 .9 0 0 0 .7 5.3 V12.3 A.9 .9 0 0 0 1.6 13.2 H7.6 A.9 .9 0 0 0 8.5 12.3 V10.8" stroke="#0ea0ef" stroke-width="1.4" fill="none"/></svg>
<svg class="a" style="left:1933px;top:226px" width="15" height="15" viewBox="0 0 15 15"><g fill="#e8680c"><path d="M0.4 1.6 C0.8 0.2 2.2 0 3 1 C6 4.5 10 9 14.2 13.8 C13.6 13.6 13 13.2 12.2 12.6 C8.5 9.5 4.5 6 1 3.2 C0.5 2.7 0.3 2.2 0.4 1.6 Z"/><path d="M14.2 0.6 C10 3.5 5.5 7.5 1.6 11 C0.6 11.9 0.2 13 0.6 14.3 C1.8 14.3 2.8 13.8 3.6 13 C7 9.6 10.6 5.2 14.2 0.6 Z"/></g></svg>
<div class="a" style="left:1171px;top:253px;width:797px;height:39px;background:#0b2533"></div>
<svg class="cb" style="left:1195px;top:263px" viewBox="0 0 18 18"><rect width="18" height="18" fill="#268ae9"/><path d="M2.9 9.3 L7.5 13.9 L15.6 5" stroke="#fff" stroke-width="2.1" fill="none"/></svg>
<div class="ttx" style="left:1295px;top:265px;font-size:13.5px">TempSetpoint</div>
<div class="ttx" style="left:1474px;top:265px;font-size:13.3px;width:149px;height:18px;overflow:hidden">my_app.my_program_config</div>
<div class="ttx" style="left:1653px;top:265px;font-size:13.5px">REAL</div>
<div class="inp" style="left:1285px;top:283px;width:169px"></div>
<div class="inp" style="left:1464px;top:283px;width:169px"></div>
<div class="inp" style="left:1643px;top:283px;width:168px"></div>
<svg class="cb" style="left:1835px;top:263px" viewBox="0 0 18 18"><rect width="18" height="18" fill="#268ae9"/><path d="M2.9 9.3 L7.5 13.9 L15.6 5" stroke="#fff" stroke-width="2.1" fill="none"/></svg>
<svg class="a" style="left:1879px;top:265px" width="14" height="14" viewBox="0 0 14 14"><rect x="4" y="0.8" width="9.2" height="9.2" rx="1.8" fill="#0ea0ef"/><path d="M3.2 4.4 H1.6 A.9 .9 0 0 0 .7 5.3 V12.3 A.9 .9 0 0 0 1.6 13.2 H7.6 A.9 .9 0 0 0 8.5 12.3 V10.8" stroke="#0ea0ef" stroke-width="1.4" fill="none"/></svg>
<svg class="a" style="left:1933px;top:265px" width="15" height="15" viewBox="0 0 15 15"><g fill="#e8680c"><path d="M0.4 1.6 C0.8 0.2 2.2 0 3 1 C6 4.5 10 9 14.2 13.8 C13.6 13.6 13 13.2 12.2 12.6 C8.5 9.5 4.5 6 1 3.2 C0.5 2.7 0.3 2.2 0.4 1.6 Z"/><path d="M14.2 0.6 C10 3.5 5.5 7.5 1.6 11 C0.6 11.9 0.2 13 0.6 14.3 C1.8 14.3 2.8 13.8 3.6 13 C7 9.6 10.6 5.2 14.2 0.6 Z"/></g></svg>
<svg class="cb" style="left:1195px;top:302px" viewBox="0 0 18 18"><rect width="18" height="18" fill="#268ae9"/><path d="M2.9 9.3 L7.5 13.9 L15.6 5" stroke="#fff" stroke-width="2.1" fill="none"/></svg>
<div class="ttx" style="left:1295px;top:304px;font-size:13.5px">TempSensor</div>
<div class="ttx" style="left:1474px;top:304px;font-size:13.3px;width:149px;height:18px;overflow:hidden">my_app.my_program_config</div>
<div class="ttx" style="left:1653px;top:304px;font-size:13.5px">REAL</div>
<div class="inp" style="left:1285px;top:322px;width:169px"></div>
<div class="inp" style="left:1464px;top:322px;width:169px"></div>
<div class="inp" style="left:1643px;top:322px;width:168px"></div>
<svg class="cb" style="left:1835px;top:302px" viewBox="0 0 18 18"><rect width="18" height="18" fill="#268ae9"/><path d="M2.9 9.3 L7.5 13.9 L15.6 5" stroke="#fff" stroke-width="2.1" fill="none"/></svg>
<svg class="a" style="left:1879px;top:304px" width="14" height="14" viewBox="0 0 14 14"><rect x="4" y="0.8" width="9.2" height="9.2" rx="1.8" fill="#0ea0ef"/><path d="M3.2 4.4 H1.6 A.9 .9 0 0 0 .7 5.3 V12.3 A.9 .9 0 0 0 1.6 13.2 H7.6 A.9 .9 0 0 0 8.5 12.3 V10.8" stroke="#0ea0ef" stroke-width="1.4" fill="none"/></svg>
<svg class="a" style="left:1933px;top:304px" width="15" height="15" viewBox="0 0 15 15"><g fill="#e8680c"><path d="M0.4 1.6 C0.8 0.2 2.2 0 3 1 C6 4.5 10 9 14.2 13.8 C13.6 13.6 13 13.2 12.2 12.6 C8.5 9.5 4.5 6 1 3.2 C0.5 2.7 0.3 2.2 0.4 1.6 Z"/><path d="M14.2 0.6 C10 3.5 5.5 7.5 1.6 11 C0.6 11.9 0.2 13 0.6 14.3 C1.8 14.3 2.8 13.8 3.6 13 C7 9.6 10.6 5.2 14.2 0.6 Z"/></g></svg>
<div class="a" style="left:1171px;top:331px;width:797px;height:39px;background:#0b2533"></div>
<svg class="cb" style="left:1195px;top:341px" viewBox="0 0 18 18"><rect width="18" height="18" fill="#268ae9"/><path d="M2.9 9.3 L7.5 13.9 L15.6 5" stroke="#fff" stroke-width="2.1" fill="none"/></svg>
<div class="ttx" style="left:1295px;top:343px;font-size:13.5px">PumpOn</div>
<div class="ttx" style="left:1474px;top:343px;font-size:13.3px;width:149px;height:18px;overflow:hidden">my_app.my_program_config</div>
<div class="ttx" style="left:1653px;top:343px;font-size:13.5px">BOOL</div>
<div class="inp" style="left:1285px;top:361px;width:169px"></div>
<div class="inp" style="left:1464px;top:361px;width:169px"></div>
<div class="inp" style="left:1643px;top:361px;width:168px"></div>
<svg class="cb" style="left:1835px;top:341px" viewBox="0 0 18 18"><rect width="18" height="18" fill="#268ae9"/><path d="M2.9 9.3 L7.5 13.9 L15.6 5" stroke="#fff" stroke-width="2.1" fill="none"/></svg>
<svg class="a" style="left:1879px;top:343px" width="14" height="14" viewBox="0 0 14 14"><rect x="4" y="0.8" width="9.2" height="9.2" rx="1.8" fill="#0ea0ef"/><path d="M3.2 4.4 H1.6 A.9 .9 0 0 0 .7 5.3 V12.3 A.9 .9 0 0 0 1.6 13.2 H7.6 A.9 .9 0 0 0 8.5 12.3 V10.8" stroke="#0ea0ef" stroke-width="1.4" fill="none"/></svg>
<svg class="a" style="left:1933px;top:343px" width="15" height="15" viewBox="0 0 15 15"><g fill="#e8680c"><path d="M0.4 1.6 C0.8 0.2 2.2 0 3 1 C6 4.5 10 9 14.2 13.8 C13.6 13.6 13 13.2 12.2 12.6 C8.5 9.5 4.5 6 1 3.2 C0.5 2.7 0.3 2.2 0.4 1.6 Z"/><path d="M14.2 0.6 C10 3.5 5.5 7.5 1.6 11 C0.6 11.9 0.2 13 0.6 14.3 C1.8 14.3 2.8 13.8 3.6 13 C7 9.6 10.6 5.2 14.2 0.6 Z"/></g></svg>
<svg class="cb" style="left:1195px;top:380px" viewBox="0 0 18 18"><rect width="18" height="18" fill="#268ae9"/><path d="M2.9 9.3 L7.5 13.9 L15.6 5" stroke="#fff" stroke-width="2.1" fill="none"/></svg>
<div class="ttx" style="left:1295px;top:382px;font-size:13.5px">ReleaseOn</div>
<div class="ttx" style="left:1474px;top:382px;font-size:13.3px;width:149px;height:18px;overflow:hidden">my_app.my_program_config</div>
<div class="ttx" style="left:1653px;top:382px;font-size:13.5px">BOOL</div>
<div class="inp" style="left:1285px;top:400px;width:169px"></div>
<div class="inp" style="left:1464px;top:400px;width:169px"></div>
<div class="inp" style="left:1643px;top:400px;width:168px"></div>
<svg class="cb" style="left:1835px;top:380px" viewBox="0 0 18 18"><rect width="18" height="18" fill="#268ae9"/><path d="M2.9 9.3 L7.5 13.9 L15.6 5" stroke="#fff" stroke-width="2.1" fill="none"/></svg>
<svg class="a" style="left:1879px;top:382px" width="14" height="14" viewBox="0 0 14 14"><rect x="4" y="0.8" width="9.2" height="9.2" rx="1.8" fill="#0ea0ef"/><path d="M3.2 4.4 H1.6 A.9 .9 0 0 0 .7 5.3 V12.3 A.9 .9 0 0 0 1.6 13.2 H7.6 A.9 .9 0 0 0 8.5 12.3 V10.8" stroke="#0ea0ef" stroke-width="1.4" fill="none"/></svg>
<svg class="a" style="left:1933px;top:382px" width="15" height="15" viewBox="0 0 15 15"><g fill="#e8680c"><path d="M0.4 1.6 C0.8 0.2 2.2 0 3 1 C6 4.5 10 9 14.2 13.8 C13.6 13.6 13 13.2 12.2 12.6 C8.5 9.5 4.5 6 1 3.2 C0.5 2.7 0.3 2.2 0.4 1.6 Z"/><path d="M14.2 0.6 C10 3.5 5.5 7.5 1.6 11 C0.6 11.9 0.2 13 0.6 14.3 C1.8 14.3 2.8 13.8 3.6 13 C7 9.6 10.6 5.2 14.2 0.6 Z"/></g></svg>
<div class="a" style="left:1171px;top:409px;width:797px;height:39px;background:#0b2533"></div>
<svg class="cb" style="left:1195px;top:419px" viewBox="0 0 18 18"><rect width="18" height="18" fill="#268ae9"/><path d="M2.9 9.3 L7.5 13.9 L15.6 5" stroke="#fff" stroke-width="2.1" fill="none"/></svg>
<div class="ttx" style="left:1295px;top:421px;font-size:13.5px">HeaterOn</div>
<div class="ttx" style="left:1474px;top:421px;font-size:13.3px;width:149px;height:18px;overflow:hidden">my_app.my_program_config</div>
<div class="ttx" style="left:1653px;top:421px;font-size:13.5px">BOOL</div>
<div class="inp" style="left:1285px;top:439px;width:169px"></div>
<div class="inp" style="left:1464px;top:439px;width:169px"></div>
<div class="inp" style="left:1643px;top:439px;width:168px"></div>
<svg class="cb" style="left:1835px;top:419px" viewBox="0 0 18 18"><rect width="18" height="18" fill="#268ae9"/><path d="M2.9 9.3 L7.5 13.9 L15.6 5" stroke="#fff" stroke-width="2.1" fill="none"/></svg>
<svg class="a" style="left:1879px;top:421px" width="14" height="14" viewBox="0 0 14 14"><rect x="4" y="0.8" width="9.2" height="9.2" rx="1.8" fill="#0ea0ef"/><path d="M3.2 4.4 H1.6 A.9 .9 0 0 0 .7 5.3 V12.3 A.9 .9 0 0 0 1.6 13.2 H7.6 A.9 .9 0 0 0 8.5 12.3 V10.8" stroke="#0ea0ef" stroke-width="1.4" fill="none"/></svg>
<svg class="a" style="left:1933px;top:421px" width="15" height="15" viewBox="0 0 15 15"><g fill="#e8680c"><path d="M0.4 1.6 C0.8 0.2 2.2 0 3 1 C6 4.5 10 9 14.2 13.8 C13.6 13.6 13 13.2 12.2 12.6 C8.5 9.5 4.5 6 1 3.2 C0.5 2.7 0.3 2.2 0.4 1.6 Z"/><path d="M14.2 0.6 C10 3.5 5.5 7.5 1.6 11 C0.6 11.9 0.2 13 0.6 14.3 C1.8 14.3 2.8 13.8 3.6 13 C7 9.6 10.6 5.2 14.2 0.6 Z"/></g></svg>
<svg class="cb" style="left:1195px;top:458px" viewBox="0 0 18 18"><rect width="18" height="18" fill="#268ae9"/><path d="M2.9 9.3 L7.5 13.9 L15.6 5" stroke="#fff" stroke-width="2.1" fill="none"/></svg>
<div class="ttx" style="left:1295px;top:460px;font-size:13.5px">Filling</div>
<div class="ttx" style="left:1474px;top:460px;font-size:13.3px;width:149px;height:18px;overflow:hidden">my_app.my_program_config</div>
<div class="ttx" style="left:1653px;top:460px;font-size:13.5px">REAL</div>
<div class="inp" style="left:1285px;top:478px;width:169px"></div>
<div class="inp" style="left:1464px;top:478px;width:169px"></div>
<div class="inp" style="left:1643px;top:478px;width:168px"></div>
<svg class="cb" style="left:1835px;top:458px" viewBox="0 0 18 18"><rect width="18" height="18" fill="#268ae9"/><path d="M2.9 9.3 L7.5 13.9 L15.6 5" stroke="#fff" stroke-width="2.1" fill="none"/></svg>
<svg class="a" style="left:1879px;top:460px" width="14" height="14" viewBox="0 0 14 14"><rect x="4" y="0.8" width="9.2" height="9.2" rx="1.8" fill="#0ea0ef"/><path d="M3.2 4.4 H1.6 A.9 .9 0 0 0 .7 5.3 V12.3 A.9 .9 0 0 0 1.6 13.2 H7.6 A.9 .9 0 0 0 8.5 12.3 V10.8" stroke="#0ea0ef" stroke-width="1.4" fill="none"/></svg>
<svg class="a" style="left:1933px;top:460px" width="15" height="15" viewBox="0 0 15 15"><g fill="#e8680c"><path d="M0.4 1.6 C0.8 0.2 2.2 0 3 1 C6 4.5 10 9 14.2 13.8 C13.6 13.6 13 13.2 12.2 12.6 C8.5 9.5 4.5 6 1 3.2 C0.5 2.7 0.3 2.2 0.4 1.6 Z"/><path d="M14.2 0.6 C10 3.5 5.5 7.5 1.6 11 C0.6 11.9 0.2 13 0.6 14.3 C1.8 14.3 2.8 13.8 3.6 13 C7 9.6 10.6 5.2 14.2 0.6 Z"/></g></svg>
<div class="a" style="left:1171px;top:487px;width:797px;height:39px;background:#0b2533"></div>
<div class="cb" style="left:1195px;top:497px;border:1.5px solid #268ae9"></div>
<div class="ttx" style="left:1295px;top:499px;font-size:13.5px">OUT_LowLevel</div>
<div class="ttx" style="left:1474px;top:499px;font-size:13.3px;width:149px;height:18px;overflow:hidden">my_app.my_program_config</div>
<div class="ttx" style="left:1653px;top:499px;font-size:13.5px">BOOL</div>
<div class="inp" style="left:1285px;top:517px;width:169px"></div>
<div class="inp" style="left:1464px;top:517px;width:169px"></div>
<div class="inp" style="left:1643px;top:517px;width:168px"></div>
<svg class="cb" style="left:1835px;top:497px" viewBox="0 0 18 18"><rect width="18" height="18" fill="#268ae9"/><path d="M2.9 9.3 L7.5 13.9 L15.6 5" stroke="#fff" stroke-width="2.1" fill="none"/></svg>
<svg class="a" style="left:1879px;top:499px" width="14" height="14" viewBox="0 0 14 14"><rect x="4" y="0.8" width="9.2" height="9.2" rx="1.8" fill="#0ea0ef"/><path d="M3.2 4.4 H1.6 A.9 .9 0 0 0 .7 5.3 V12.3 A.9 .9 0 0 0 1.6 13.2 H7.6 A.9 .9 0 0 0 8.5 12.3 V10.8" stroke="#0ea0ef" stroke-width="1.4" fill="none"/></svg>
<svg class="a" style="left:1933px;top:499px" width="15" height="15" viewBox="0 0 15 15"><g fill="#e8680c"><path d="M0.4 1.6 C0.8 0.2 2.2 0 3 1 C6 4.5 10 9 14.2 13.8 C13.6 13.6 13 13.2 12.2 12.6 C8.5 9.5 4.5 6 1 3.2 C0.5 2.7 0.3 2.2 0.4 1.6 Z"/><path d="M14.2 0.6 C10 3.5 5.5 7.5 1.6 11 C0.6 11.9 0.2 13 0.6 14.3 C1.8 14.3 2.8 13.8 3.6 13 C7 9.6 10.6 5.2 14.2 0.6 Z"/></g></svg>
<div class="cb" style="left:1195px;top:536px;border:1.5px solid #268ae9"></div>
<div class="ttx" style="left:1295px;top:538px;font-size:13.5px">OUT_HighLevel</div>
<div class="ttx" style="left:1474px;top:538px;font-size:13.3px;width:149px;height:18px;overflow:hidden">my_app.my_program_config</div>
<div class="ttx" style="left:1653px;top:538px;font-size:13.5px">BOOL</div>
<div class="inp" style="left:1285px;top:556px;width:169px"></div>
<div class="inp" style="left:1464px;top:556px;width:169px"></div>
<div class="inp" style="left:1643px;top:556px;width:168px"></div>
<svg class="cb" style="left:1835px;top:536px" viewBox="0 0 18 18"><rect width="18" height="18" fill="#268ae9"/><path d="M2.9 9.3 L7.5 13.9 L15.6 5" stroke="#fff" stroke-width="2.1" fill="none"/></svg>
<svg class="a" style="left:1879px;top:538px" width="14" height="14" viewBox="0 0 14 14"><rect x="4" y="0.8" width="9.2" height="9.2" rx="1.8" fill="#0ea0ef"/><path d="M3.2 4.4 H1.6 A.9 .9 0 0 0 .7 5.3 V12.3 A.9 .9 0 0 0 1.6 13.2 H7.6 A.9 .9 0 0 0 8.5 12.3 V10.8" stroke="#0ea0ef" stroke-width="1.4" fill="none"/></svg>
<svg class="a" style="left:1933px;top:538px" width="15" height="15" viewBox="0 0 15 15"><g fill="#e8680c"><path d="M0.4 1.6 C0.8 0.2 2.2 0 3 1 C6 4.5 10 9 14.2 13.8 C13.6 13.6 13 13.2 12.2 12.6 C8.5 9.5 4.5 6 1 3.2 C0.5 2.7 0.3 2.2 0.4 1.6 Z"/><path d="M14.2 0.6 C10 3.5 5.5 7.5 1.6 11 C0.6 11.9 0.2 13 0.6 14.3 C1.8 14.3 2.8 13.8 3.6 13 C7 9.6 10.6 5.2 14.2 0.6 Z"/></g></svg>
<div class="a" style="left:1171px;top:565px;width:797px;height:39px;background:#0b2533"></div>
<div class="cb" style="left:1195px;top:575px;border:1.5px solid #268ae9"></div>
<div class="ttx" style="left:1295px;top:577px;font-size:13.5px">OUT_TempSensor</div>
<div class="ttx" style="left:1474px;top:577px;font-size:13.3px;width:149px;height:18px;overflow:hidden">my_app.my_program_config</div>
<div class="ttx" style="left:1653px;top:577px;font-size:13.5px">REAL</div>
<div class="inp" style="left:1285px;top:595px;width:169px"></div>
<div class="inp" style="left:1464px;top:595px;width:169px"></div>
<div class="inp" style="left:1643px;top:595px;width:168px"></div>
<svg class="cb" style="left:1835px;top:575px" viewBox="0 0 18 18"><rect width="18" height="18" fill="#268ae9"/><path d="M2.9 9.3 L7.5 13.9 L15.6 5" stroke="#fff" stroke-width="2.1" fill="none"/></svg>
<svg class="a" style="left:1879px;top:577px" width="14" height="14" viewBox="0 0 14 14"><rect x="4" y="0.8" width="9.2" height="9.2" rx="1.8" fill="#0ea0ef"/><path d="M3.2 4.4 H1.6 A.9 .9 0 0 0 .7 5.3 V12.3 A.9 .9 0 0 0 1.6 13.2 H7.6 A.9 .9 0 0 0 8.5 12.3 V10.8" stroke="#0ea0ef" stroke-width="1.4" fill="none"/></svg>
<svg class="a" style="left:1933px;top:577px" width="15" height="15" viewBox="0 0 15 15"><g fill="#e8680c"><path d="M0.4 1.6 C0.8 0.2 2.2 0 3 1 C6 4.5 10 9 14.2 13.8 C13.6 13.6 13 13.2 12.2 12.6 C8.5 9.5 4.5 6 1 3.2 C0.5 2.7 0.3 2.2 0.4 1.6 Z"/><path d="M14.2 0.6 C10 3.5 5.5 7.5 1.6 11 C0.6 11.9 0.2 13 0.6 14.3 C1.8 14.3 2.8 13.8 3.6 13 C7 9.6 10.6 5.2 14.2 0.6 Z"/></g></svg>
<div class="cb" style="left:1195px;top:614px;border:1.5px solid #268ae9"></div>
<div class="ttx" style="left:1295px;top:616px;font-size:13.5px">OUT_TempSetpoint</div>
<div class="ttx" style="left:1474px;top:616px;font-size:13.3px;width:149px;height:18px;overflow:hidden">my_app.my_program_config</div>
<div class="ttx" style="left:1653px;top:616px;font-size:13.5px">REAL</div>
<div class="inp" style="left:1285px;top:634px;width:169px"></div>
<div class="inp" style="left:1464px;top:634px;width:169px"></div>
<div class="inp" style="left:1643px;top:634px;width:168px"></div>
<svg class="cb" style="left:1835px;top:614px" viewBox="0 0 18 18"><rect width="18" height="18" fill="#268ae9"/><path d="M2.9 9.3 L7.5 13.9 L15.6 5" stroke="#fff" stroke-width="2.1" fill="none"/></svg>
<svg class="a" style="left:1879px;top:616px" width="14" height="14" viewBox="0 0 14 14"><rect x="4" y="0.8" width="9.2" height="9.2" rx="1.8" fill="#0ea0ef"/><path d="M3.2 4.4 H1.6 A.9 .9 0 0 0 .7 5.3 V12.3 A.9 .9 0 0 0 1.6 13.2 H7.6 A.9 .9 0 0 0 8.5 12.3 V10.8" stroke="#0ea0ef" stroke-width="1.4" fill="none"/></svg>
<svg class="a" style="left:1933px;top:616px" width="15" height="15" viewBox="0 0 15 15"><g fill="#e8680c"><path d="M0.4 1.6 C0.8 0.2 2.2 0 3 1 C6 4.5 10 9 14.2 13.8 C13.6 13.6 13 13.2 12.2 12.6 C8.5 9.5 4.5 6 1 3.2 C0.5 2.7 0.3 2.2 0.4 1.6 Z"/><path d="M14.2 0.6 C10 3.5 5.5 7.5 1.6 11 C0.6 11.9 0.2 13 0.6 14.3 C1.8 14.3 2.8 13.8 3.6 13 C7 9.6 10.6 5.2 14.2 0.6 Z"/></g></svg>
<div class="a" style="left:1171px;top:643px;width:797px;height:39px;background:#0b2533"></div>
<div class="cb" style="left:1195px;top:653px;border:1.5px solid #268ae9"></div>
<div class="ttx" style="left:1295px;top:655px;font-size:13.5px">OUT_PumpOn</div>
<div class="ttx" style="left:1474px;top:655px;font-size:13.3px;width:149px;height:18px;overflow:hidden">my_app.my_program_config</div>
<div class="ttx" style="left:1653px;top:655px;font-size:13.5px">BOOL</div>
<div class="inp" style="left:1285px;top:673px;width:169px"></div>
<div class="inp" style="left:1464px;top:673px;width:169px"></div>
<div class="inp" style="left:1643px;top:673px;width:168px"></div>
<svg class="cb" style="left:1835px;top:653px" viewBox="0 0 18 18"><rect width="18" height="18" fill="#268ae9"/><path d="M2.9 9.3 L7.5 13.9 L15.6 5" stroke="#fff" stroke-width="2.1" fill="none"/></svg>
<svg class="a" style="left:1879px;top:655px" width="14" height="14" viewBox="0 0 14 14"><rect x="4" y="0.8" width="9.2" height="9.2" rx="1.8" fill="#0ea0ef"/><path d="M3.2 4.4 H1.6 A.9 .9 0 0 0 .7 5.3 V12.3 A.9 .9 0 0 0 1.6 13.2 H7.6 A.9 .9 0 0 0 8.5 12.3 V10.8" stroke="#0ea0ef" stroke-width="1.4" fill="none"/></svg>
<svg class="a" style="left:1933px;top:655px" width="15" height="15" viewBox="0 0 15 15"><g fill="#e8680c"><path d="M0.4 1.6 C0.8 0.2 2.2 0 3 1 C6 4.5 10 9 14.2 13.8 C13.6 13.6 13 13.2 12.2 12.6 C8.5 9.5 4.5 6 1 3.2 C0.5 2.7 0.3 2.2 0.4 1.6 Z"/><path d="M14.2 0.6 C10 3.5 5.5 7.5 1.6 11 C0.6 11.9 0.2 13 0.6 14.3 C1.8 14.3 2.8 13.8 3.6 13 C7 9.6 10.6 5.2 14.2 0.6 Z"/></g></svg>
<div class="cb" style="left:1195px;top:692px;border:1.5px solid #268ae9"></div>
<div class="ttx" style="left:1295px;top:694px;font-size:13.5px">OUT_ReleaseOn</div>
<div class="ttx" style="left:1474px;top:694px;font-size:13.3px;width:149px;height:18px;overflow:hidden">my_app.my_program_config</div>
<div class="ttx" style="left:1653px;top:694px;font-size:13.5px">BOOL</div>
<div class="inp" style="left:1285px;top:712px;width:169px"></div>
<div class="inp" style="left:1464px;top:712px;width:169px"></div>
<div class="inp" style="left:1643px;top:712px;width:168px"></div>
<svg class="cb" style="left:1835px;top:692px" viewBox="0 0 18 18"><rect width="18" height="18" fill="#268ae9"/><path d="M2.9 9.3 L7.5 13.9 L15.6 5" stroke="#fff" stroke-width="2.1" fill="none"/></svg>
<svg class="a" style="left:1879px;top:694px" width="14" height="14" viewBox="0 0 14 14"><rect x="4" y="0.8" width="9.2" height="9.2" rx="1.8" fill="#0ea0ef"/><path d="M3.2 4.4 H1.6 A.9 .9 0 0 0 .7 5.3 V12.3 A.9 .9 0 0 0 1.6 13.2 H7.6 A.9 .9 0 0 0 8.5 12.3 V10.8" stroke="#0ea0ef" stroke-width="1.4" fill="none"/></svg>
<svg class="a" style="left:1933px;top:694px" width="15" height="15" viewBox="0 0 15 15"><g fill="#e8680c"><path d="M0.4 1.6 C0.8 0.2 2.2 0 3 1 C6 4.5 10 9 14.2 13.8 C13.6 13.6 13 13.2 12.2 12.6 C8.5 9.5 4.5 6 1 3.2 C0.5 2.7 0.3 2.2 0.4 1.6 Z"/><path d="M14.2 0.6 C10 3.5 5.5 7.5 1.6 11 C0.6 11.9 0.2 13 0.6 14.3 C1.8 14.3 2.8 13.8 3.6 13 C7 9.6 10.6 5.2 14.2 0.6 Z"/></g></svg>
<div class="a" style="left:1171px;top:721px;width:797px;height:39px;background:#0b2533"></div>
<div class="cb" style="left:1195px;top:731px;border:1.5px solid #268ae9"></div>
<div class="ttx" style="left:1295px;top:733px;font-size:13.5px">OUT_HeaterOn</div>
<div class="ttx" style="left:1474px;top:733px;font-size:13.3px;width:149px;height:18px;overflow:hidden">my_app.my_program_config</div>
<div class="ttx" style="left:1653px;top:733px;font-size:13.5px">BOOL</div>
<div class="inp" style="left:1285px;top:751px;width:169px"></div>
<div class="inp" style="left:1464px;top:751px;width:169px"></div>
<div class="inp" style="left:1643px;top:751px;width:168px"></div>
<svg class="cb" style="left:1835px;top:731px" viewBox="0 0 18 18"><rect width="18" height="18" fill="#268ae9"/><path d="M2.9 9.3 L7.5 13.9 L15.6 5" stroke="#fff" stroke-width="2.1" fill="none"/></svg>
<svg class="a" style="left:1879px;top:733px" width="14" height="14" viewBox="0 0 14 14"><rect x="4" y="0.8" width="9.2" height="9.2" rx="1.8" fill="#0ea0ef"/><path d="M3.2 4.4 H1.6 A.9 .9 0 0 0 .7 5.3 V12.3 A.9 .9 0 0 0 1.6 13.2 H7.6 A.9 .9 0 0 0 8.5 12.3 V10.8" stroke="#0ea0ef" stroke-width="1.4" fill="none"/></svg>
<svg class="a" style="left:1933px;top:733px" width="15" height="15" viewBox="0 0 15 15"><g fill="#e8680c"><path d="M0.4 1.6 C0.8 0.2 2.2 0 3 1 C6 4.5 10 9 14.2 13.8 C13.6 13.6 13 13.2 12.2 12.6 C8.5 9.5 4.5 6 1 3.2 C0.5 2.7 0.3 2.2 0.4 1.6 Z"/><path d="M14.2 0.6 C10 3.5 5.5 7.5 1.6 11 C0.6 11.9 0.2 13 0.6 14.3 C1.8 14.3 2.8 13.8 3.6 13 C7 9.6 10.6 5.2 14.2 0.6 Z"/></g></svg>
<div class="cb" style="left:1195px;top:770px;border:1.5px solid #268ae9"></div>
<div class="ttx" style="left:1295px;top:772px;font-size:13.5px">OUT_Filling</div>
<div class="ttx" style="left:1474px;top:772px;font-size:13.3px;width:149px;height:18px;overflow:hidden">my_app.my_program_config</div>
<div class="ttx" style="left:1653px;top:772px;font-size:13.5px">REAL</div>
<div class="inp" style="left:1285px;top:790px;width:169px"></div>
<div class="inp" style="left:1464px;top:790px;width:169px"></div>
<div class="inp" style="left:1643px;top:790px;width:168px"></div>
<svg class="cb" style="left:1835px;top:770px" viewBox="0 0 18 18"><rect width="18" height="18" fill="#268ae9"/><path d="M2.9 9.3 L7.5 13.9 L15.6 5" stroke="#fff" stroke-width="2.1" fill="none"/></svg>
<svg class="a" style="left:1879px;top:772px" width="14" height="14" viewBox="0 0 14 14"><rect x="4" y="0.8" width="9.2" height="9.2" rx="1.8" fill="#0ea0ef"/><path d="M3.2 4.4 H1.6 A.9 .9 0 0 0 .7 5.3 V12.3 A.9 .9 0 0 0 1.6 13.2 H7.6 A.9 .9 0 0 0 8.5 12.3 V10.8" stroke="#0ea0ef" stroke-width="1.4" fill="none"/></svg>
<svg class="a" style="left:1933px;top:772px" width="15" height="15" viewBox="0 0 15 15"><g fill="#e8680c"><path d="M0.4 1.6 C0.8 0.2 2.2 0 3 1 C6 4.5 10 9 14.2 13.8 C13.6 13.6 13 13.2 12.2 12.6 C8.5 9.5 4.5 6 1 3.2 C0.5 2.7 0.3 2.2 0.4 1.6 Z"/><path d="M14.2 0.6 C10 3.5 5.5 7.5 1.6 11 C0.6 11.9 0.2 13 0.6 14.3 C1.8 14.3 2.8 13.8 3.6 13 C7 9.6 10.6 5.2 14.2 0.6 Z"/></g></svg>
<div class="a" style="left:49px;top:883px;width:1942px;height:222px;background:#0c2b3d;border-top:1px solid #3d5866;border-left:1px solid #3d5866"></div>
<div class="a" style="left:50px;top:884px;width:1941px;height:24px;background:#0c202b"></div>
<div class="a" style="left:102px;top:884px;width:47px;height:24px;background:#0a1d27"></div>
<div class="a" style="left:50px;top:907px;width:52px;height:1px;background:#f0465a;z-index:2"></div>
<div class="t" style="left:60px;top:889px;font-size:12px;color:#eeeeee">Errors</div>
<div class="t" style="left:112px;top:889px;font-size:12px;color:#eeeeee">Build</div>
<div class="a" style="left:1963px;top:895px;width:12px;height:2px;background:#1ea0ee"></div>
<div class="a" style="left:50px;top:908px;width:5px;height:197px;background:#0a1c26"></div>
<div class="a" style="left:50px;top:1008px;width:1px;height:13px;background:#d0d0d0"></div>
<div class="a" style="left:53px;top:1008px;width:1px;height:13px;background:#d0d0d0"></div>
</div></body></html>
